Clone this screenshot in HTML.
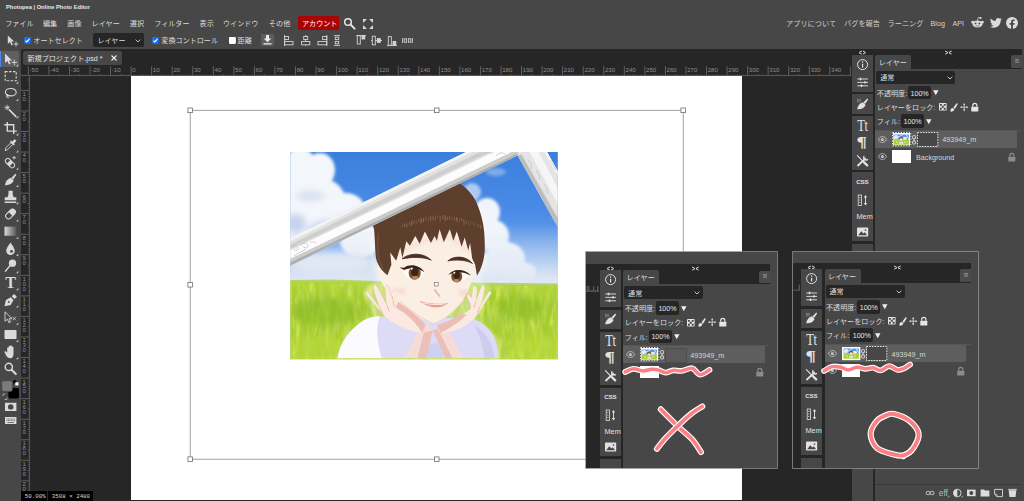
<!DOCTYPE html>
<html lang="ja"><head><meta charset="utf-8"><title>Photopea | Online Photo Editor</title>
<style>
html,body{margin:0;padding:0;width:1024px;height:501px;overflow:hidden;background:#262626;
font-family:"Liberation Sans","Noto Sans CJK JP",sans-serif;color:#dcdcdc;font-size:7.1px;line-height:1}
.a{position:absolute}
.t{position:absolute;white-space:nowrap;line-height:10px;height:10px;margin-top:0.9px}
svg{position:absolute;overflow:visible}
#top{left:0;top:0;width:1024px;height:49px;background:#474747}
#tb{left:0;top:49px;width:20.600px;height:452px;background:#474747}
#root{position:absolute;left:0;top:0;width:1024px;height:501px;overflow:hidden}

</style></head><body>
<div id="root">
<div class="a" id="top"></div>
<div class="t" style="left:6px;top:1.400px;font-size:5.700px;font-weight:bold;color:#e8e8e8">Photopea | Online Photo Editor</div>
<div class="t" style="left:5.2px;top:18px">ファイル</div>
<div class="t" style="left:43px;top:18px">編集</div>
<div class="t" style="left:67.3px;top:18px">画像</div>
<div class="t" style="left:91.6px;top:18px">レイヤー</div>
<div class="t" style="left:129.8px;top:18px">選択</div>
<div class="t" style="left:154.2px;top:18px">フィルター</div>
<div class="t" style="left:199.6px;top:18px">表示</div>
<div class="t" style="left:223px;top:18px">ウインドウ</div>
<div class="t" style="left:269px;top:18px">その他</div>
<div class="a" style="left:297.6px;top:16.3px;width:41px;height:14px;background:#a80404;border-radius:1.5px"></div>
<div class="t" style="left:302px;top:18px;color:#fff">アカウント</div>
<svg style="left:343px;top:17px" width="13" height="13" viewBox="0 0 13 13"><circle cx="5" cy="5" r="3.3" fill="none" stroke="#e6e6e6" stroke-width="1.5"/><path d="M7.4 7.4 L11.6 11.6" stroke="#e6e6e6" stroke-width="2" stroke-linecap="round"/></svg>
<svg style="left:362.5px;top:18.5px" width="10" height="10" viewBox="0 0 10 10"><path d="M0.7 3.2V0.7H3.2 M6.8 0.7H9.3V3.2 M9.3 6.8V9.3H6.8 M3.2 9.3H0.7V6.8" fill="none" stroke="#e6e6e6" stroke-width="1.4"/></svg>
<div class="t" style="left:786px;top:18px;font-size:7.2px;color:#d0d0d0">アプリについて</div>
<div class="t" style="left:844px;top:18px;font-size:7.2px;color:#d0d0d0">バグを報告</div>
<div class="t" style="left:887.5px;top:18px;font-size:7.2px;color:#d0d0d0">ラーニング</div>
<div class="t" style="left:930.5px;top:18px;font-size:7.2px;color:#d0d0d0">Blog</div>
<div class="t" style="left:952.5px;top:18px;font-size:7.2px;color:#d0d0d0">API</div>
<svg style="left:970.5px;top:16px" width="13" height="13" viewBox="0 0 13 13" fill="#dcdcdc"><ellipse cx="6.5" cy="8" rx="5" ry="3.6"/><circle cx="1.7" cy="6.2" r="1.4"/><circle cx="11.3" cy="6.2" r="1.4"/><circle cx="9.6" cy="2" r="1.1"/><path d="M6.5 4.6 L7.3 1.4 L9.6 2" fill="none" stroke="#dcdcdc" stroke-width="0.7"/><circle cx="4.6" cy="7.4" r="0.9" fill="#474747"/><circle cx="8.4" cy="7.4" r="0.9" fill="#474747"/><path d="M4.5 9.5 Q6.5 10.8 8.5 9.5" fill="none" stroke="#474747" stroke-width="0.6"/></svg>
<svg style="left:989.5px;top:17.5px" width="12" height="10" viewBox="0 0 24 20" fill="#dcdcdc"><path d="M23.6 2.4c-.9.4-1.8.6-2.8.8 1-.6 1.800-1.600 2.200-2.700-1 .6-2 1-3.100 1.200C19 .7 17.700.1 16.300.1c-2.700 0-4.900 2.200-4.900 4.900 0 .4 0 .8.100 1.100C7.400 5.900 3.800 4 1.400 1 1 1.700.8 2.600.8 3.500c0 1.700.9 3.200 2.200 4.100-.8 0-1.600-.2-2.200-.6v.1c0 2.400 1.700 4.400 3.900 4.800-.4.100-.8.200-1.300.2-.3 0-.6 0-.9-.1.600 2 2.400 3.400 4.600 3.400-1.700 1.300-3.800 2.100-6.100 2.100-.4 0-.8 0-1.200-.1 2.200 1.400 4.800 2.200 7.500 2.200 9.100 0 14-7.500 14-14v-.6c1-.7 1.800-1.600 2.500-2.600z"/></svg>
<svg style="left:1005.5px;top:16.5px" width="12" height="12" viewBox="0 0 12 12"><circle cx="6" cy="6" r="6" fill="#dcdcdc"/><path d="M8.300 7.700 L8.600 6 H6.900 V4.900 C6.900 4.400 7.100 4 7.800 4 H8.600 V2.500 C8.600 2.500 7.900 2.400 7.300 2.400 C5.900 2.400 5.100 3.200 5.100 4.700 V6 H3.600 V7.700 H5.100 V12 H6.900 V7.700 Z" fill="#474747"/></svg>
<svg style="left:6.5px;top:35px" width="12" height="12" viewBox="0 0 12 12"><path d="M0.8 0.6 L0.8 9 L3 7 L4.400 10.400 L5.800 9.800 L4.400 6.500 L7.200 6.500 Z" fill="#d8d8d8"/><path d="M9 6.500V11.500 M6.500 9H11.500" stroke="#d8d8d8" stroke-width="0.9"/></svg>
<svg style="left:24.2px;top:36.900px" width="6.900" height="6.900" viewBox="0 0 12 12"><rect width="12" height="12" rx="1.800" fill="#1a6fe8"/><path d="M2.600 6.200 L5 8.600 L9.600 3.400" fill="none" stroke="#fff" stroke-width="1.900"/></svg>
<div class="t" style="left:33.3px;top:35.400px">オートセレクト</div>
<div class="a" style="left:93px;top:33.2px;width:50.500px;height:14.300px;background:#262626;border-radius:2px"></div>
<div class="t" style="left:97.4px;top:35.400px">レイヤー</div>
<svg style="left:134.5px;top:38.5px" width="6" height="4" viewBox="0 0 6 4"><path d="M0.600 0.600 L3 3 L5.400 0.600" fill="none" stroke="#d0d0d0" stroke-width="0.9"/></svg>
<svg style="left:152.2px;top:36.900px" width="6.900" height="6.900" viewBox="0 0 12 12"><rect width="12" height="12" rx="1.800" fill="#1a6fe8"/><path d="M2.600 6.200 L5 8.600 L9.600 3.400" fill="none" stroke="#fff" stroke-width="1.900"/></svg>
<div class="t" style="left:161.3px;top:35.400px">変換コントロール</div>
<svg style="left:228.7px;top:36.900px" width="6.900" height="6.900" viewBox="0 0 12 12"><rect width="12" height="12" rx="1.800" fill="#fff"/></svg>
<div class="t" style="left:237.6px;top:35.400px">距離</div>
<div class="a" style="left:261.3px;top:33.600px;width:13.200px;height:12.800px;background:#5c5c5c;border-radius:1px"></div>
<svg style="left:263.4px;top:35.300px" width="9" height="10" viewBox="0 0 9 10" fill="#ececec"><path d="M3 0H6V3.500H8.300L4.500 7.200L0.700 3.500H3Z"/><rect x="0.500" y="8.200" width="8" height="1.300"/></svg>
<svg style="left:284px;top:35px" width="10" height="11" viewBox="0 0 10 11" fill="none" stroke="#d4d4d4" stroke-width="0.9"><path d="M0.600 0V11"/><rect x="0.600" y="1.500" width="4" height="3"/><rect x="0.600" y="6.500" width="8.400" height="3.300"/></svg>
<svg style="left:300.5px;top:35px" width="10" height="11" viewBox="0 0 10 11" fill="none" stroke="#d4d4d4" stroke-width="0.9"><path d="M4.700 0V11"/><rect x="2.700" y="1.500" width="4" height="3" fill="#474747"/><rect x="0.600" y="6.500" width="8.200" height="3.300" fill="#474747"/></svg>
<svg style="left:317px;top:35px" width="11" height="11" viewBox="0 0 11 11" fill="none" stroke="#d4d4d4" stroke-width="0.9"><path d="M9.800 0V11"/><rect x="5.600" y="1.500" width="4.200" height="3"/><rect x="1" y="6.500" width="8.800" height="3.300"/></svg>
<svg style="left:333.5px;top:35px" width="6" height="11" viewBox="0 0 6 11" fill="none" stroke="#d4d4d4" stroke-width="0.9"><path d="M0 0.600H6M0 10.400H6"/><rect x="1.300" y="2.200" width="3.400" height="2.400"/><rect x="1.300" y="6.400" width="3.400" height="2.400"/></svg>
<svg style="left:356px;top:35px" width="10" height="11" viewBox="0 0 10 11" fill="none" stroke="#d4d4d4" stroke-width="0.9"><path d="M0 0.600H10"/><rect x="1.300" y="0.600" width="3" height="8.400"/><rect x="6" y="0.600" width="2.800" height="3.400" fill="#d4d4d4"/></svg>
<svg style="left:371px;top:35px" width="11" height="11" viewBox="0 0 11 11" fill="none" stroke="#d4d4d4" stroke-width="0.9"><path d="M0 5.500H11"/><rect x="1.300" y="1.200" width="3" height="8.600" fill="#474747"/><rect x="6.300" y="3.600" width="3" height="3.800" fill="#d4d4d4"/></svg>
<svg style="left:387px;top:35px" width="10" height="11" viewBox="0 0 10 11" fill="none" stroke="#d4d4d4" stroke-width="0.9"><path d="M0 10.400H10"/><rect x="1.300" y="1.600" width="3" height="8.800"/><rect x="6" y="6.400" width="2.800" height="4" fill="#d4d4d4"/></svg>
<svg style="left:402px;top:35px" width="11" height="11" viewBox="0 0 11 11" fill="none" stroke="#d4d4d4" stroke-width="0.9"><path d="M0.600 3V8M10.400 3V8"/><rect x="2.200" y="3.800" width="2.400" height="3.400"/><rect x="6.400" y="3.800" width="2.400" height="3.400"/></svg>
<div class="a" style="left:23px;top:51px;width:99px;height:14.200px;background:#474747;border-radius:2px"></div>
<div class="t" style="left:27.5px;top:53.200px;color:#e4e4e4">新規プロジェクト.psd *</div>
<svg style="left:111px;top:55px" width="6" height="6" viewBox="0 0 6 6"><path d="M0.500 0.500L5.500 5.500M5.500 0.500L0.500 5.500" stroke="#f0f0f0" stroke-width="1.100"/></svg>
<svg style="left:0;top:0" width="1024" height="501" viewBox="0 0 1024 501"><path d="M22.18 74.800V75.900 M24.24 74.800V75.900 M26.30 74.800V75.900 M28.35 66.200V75.900 M30.40 74.800V75.900 M32.46 74.800V75.900 M34.51 74.800V75.900 M36.57 74.800V75.900 M38.62 74.200V75.900 M40.68 74.800V75.900 M42.73 74.800V75.900 M44.79 74.800V75.900 M46.84 74.800V75.900 M48.90 66.200V75.900 M50.95 74.800V75.900 M53.01 74.800V75.900 M55.06 74.800V75.900 M57.12 74.800V75.900 M59.17 74.200V75.900 M61.23 74.800V75.900 M63.28 74.800V75.900 M65.34 74.800V75.900 M67.39 74.800V75.900 M69.45 66.200V75.900 M71.50 74.800V75.900 M73.56 74.800V75.900 M75.61 74.800V75.900 M77.67 74.800V75.900 M79.72 74.200V75.900 M81.78 74.800V75.900 M83.83 74.800V75.900 M85.89 74.800V75.900 M87.94 74.800V75.900 M90.00 66.200V75.900 M92.05 74.800V75.900 M94.11 74.800V75.900 M96.16 74.800V75.900 M98.22 74.800V75.900 M100.27 74.200V75.900 M102.33 74.800V75.900 M104.38 74.800V75.900 M106.44 74.800V75.900 M108.49 74.800V75.900 M110.55 66.200V75.900 M112.60 74.800V75.900 M114.66 74.800V75.900 M116.71 74.800V75.900 M118.77 74.800V75.900 M120.82 74.200V75.900 M122.88 74.800V75.900 M124.93 74.800V75.900 M126.99 74.800V75.900 M129.04 74.800V75.900 M131.10 66.200V75.900 M133.16 74.800V75.900 M135.21 74.800V75.900 M137.26 74.800V75.900 M139.32 74.800V75.900 M141.38 74.200V75.900 M143.43 74.800V75.900 M145.48 74.800V75.900 M147.54 74.800V75.900 M149.59 74.800V75.900 M151.65 66.200V75.900 M153.70 74.800V75.900 M155.76 74.800V75.900 M157.81 74.800V75.900 M159.87 74.800V75.900 M161.92 74.200V75.900 M163.98 74.800V75.900 M166.03 74.800V75.900 M168.09 74.800V75.900 M170.14 74.800V75.900 M172.20 66.200V75.900 M174.25 74.800V75.900 M176.31 74.800V75.900 M178.37 74.800V75.900 M180.42 74.800V75.900 M182.47 74.200V75.900 M184.53 74.800V75.900 M186.58 74.800V75.900 M188.64 74.800V75.900 M190.69 74.800V75.900 M192.75 66.200V75.900 M194.81 74.800V75.900 M196.86 74.800V75.900 M198.91 74.800V75.900 M200.97 74.800V75.900 M203.02 74.200V75.900 M205.08 74.800V75.900 M207.13 74.800V75.900 M209.19 74.800V75.900 M211.25 74.800V75.900 M213.30 66.200V75.900 M215.36 74.800V75.900 M217.41 74.800V75.900 M219.46 74.800V75.900 M221.52 74.800V75.900 M223.57 74.200V75.900 M225.63 74.800V75.900 M227.69 74.800V75.900 M229.74 74.800V75.900 M231.80 74.800V75.900 M233.85 66.200V75.900 M235.90 74.800V75.900 M237.96 74.800V75.900 M240.01 74.800V75.900 M242.07 74.800V75.900 M244.12 74.200V75.900 M246.18 74.800V75.900 M248.24 74.800V75.900 M250.29 74.800V75.900 M252.34 74.800V75.900 M254.40 66.200V75.900 M256.45 74.800V75.900 M258.51 74.800V75.900 M260.56 74.800V75.900 M262.62 74.800V75.900 M264.67 74.200V75.900 M266.73 74.800V75.900 M268.78 74.800V75.900 M270.84 74.800V75.900 M272.89 74.800V75.900 M274.95 66.200V75.900 M277.00 74.800V75.900 M279.06 74.800V75.900 M281.12 74.800V75.900 M283.17 74.800V75.900 M285.23 74.200V75.900 M287.28 74.800V75.900 M289.34 74.800V75.900 M291.39 74.800V75.900 M293.44 74.800V75.900 M295.50 66.200V75.900 M297.55 74.800V75.900 M299.61 74.800V75.900 M301.66 74.800V75.900 M303.72 74.800V75.900 M305.77 74.200V75.900 M307.83 74.800V75.900 M309.88 74.800V75.900 M311.94 74.800V75.900 M314.00 74.800V75.900 M316.05 66.200V75.900 M318.11 74.800V75.900 M320.16 74.800V75.900 M322.22 74.800V75.900 M324.27 74.800V75.900 M326.32 74.200V75.900 M328.38 74.800V75.900 M330.44 74.800V75.900 M332.49 74.800V75.900 M334.54 74.800V75.900 M336.60 66.200V75.900 M338.65 74.800V75.900 M340.71 74.800V75.900 M342.76 74.800V75.900 M344.82 74.800V75.900 M346.88 74.200V75.900 M348.93 74.800V75.900 M350.99 74.800V75.900 M353.04 74.800V75.900 M355.10 74.800V75.900 M357.15 66.200V75.900 M359.21 74.800V75.900 M361.26 74.800V75.900 M363.31 74.800V75.900 M365.37 74.800V75.900 M367.42 74.200V75.900 M369.48 74.800V75.900 M371.53 74.800V75.900 M373.59 74.800V75.900 M375.64 74.800V75.900 M377.70 66.200V75.900 M379.75 74.800V75.900 M381.81 74.800V75.900 M383.87 74.800V75.900 M385.92 74.800V75.900 M387.98 74.200V75.900 M390.03 74.800V75.900 M392.09 74.800V75.900 M394.14 74.800V75.900 M396.20 74.800V75.900 M398.25 66.200V75.900 M400.31 74.800V75.900 M402.36 74.800V75.900 M404.41 74.800V75.900 M406.47 74.800V75.900 M408.52 74.200V75.900 M410.58 74.800V75.900 M412.63 74.800V75.900 M414.69 74.800V75.900 M416.75 74.800V75.900 M418.80 66.200V75.900 M420.86 74.800V75.900 M422.91 74.800V75.900 M424.97 74.800V75.900 M427.02 74.800V75.900 M429.08 74.200V75.900 M431.13 74.800V75.900 M433.18 74.800V75.900 M435.24 74.800V75.900 M437.30 74.800V75.900 M439.35 66.200V75.900 M441.40 74.800V75.900 M443.46 74.800V75.900 M445.51 74.800V75.900 M447.57 74.800V75.900 M449.62 74.200V75.900 M451.68 74.800V75.900 M453.74 74.800V75.900 M455.79 74.800V75.900 M457.85 74.800V75.900 M459.90 66.200V75.900 M461.96 74.800V75.900 M464.01 74.800V75.900 M466.07 74.800V75.900 M468.12 74.800V75.900 M470.17 74.200V75.900 M472.23 74.800V75.900 M474.28 74.800V75.900 M476.34 74.800V75.900 M478.39 74.800V75.900 M480.45 66.200V75.900 M482.50 74.800V75.900 M484.56 74.800V75.900 M486.62 74.800V75.900 M488.67 74.800V75.900 M490.73 74.200V75.900 M492.78 74.800V75.900 M494.84 74.800V75.900 M496.89 74.800V75.900 M498.95 74.800V75.900 M501.00 66.200V75.900 M503.06 74.800V75.900 M505.11 74.800V75.900 M507.16 74.800V75.900 M509.22 74.800V75.900 M511.27 74.200V75.900 M513.33 74.800V75.900 M515.38 74.800V75.900 M517.44 74.800V75.900 M519.50 74.800V75.900 M521.55 66.200V75.900 M523.61 74.800V75.900 M525.66 74.800V75.900 M527.72 74.800V75.900 M529.77 74.800V75.900 M531.83 74.200V75.900 M533.88 74.800V75.900 M535.94 74.800V75.900 M537.99 74.800V75.900 M540.05 74.800V75.900 M542.10 66.200V75.900 M544.15 74.800V75.900 M546.21 74.800V75.900 M548.27 74.800V75.900 M550.32 74.800V75.900 M552.38 74.200V75.900 M554.43 74.800V75.900 M556.49 74.800V75.900 M558.54 74.800V75.900 M560.60 74.800V75.900 M562.65 66.200V75.900 M564.71 74.800V75.900 M566.76 74.800V75.900 M568.82 74.800V75.900 M570.87 74.800V75.900 M572.92 74.200V75.900 M574.98 74.800V75.900 M577.04 74.800V75.900 M579.09 74.800V75.900 M581.14 74.800V75.900 M583.20 66.200V75.900 M585.25 74.800V75.900 M587.31 74.800V75.900 M589.37 74.800V75.900 M591.42 74.800V75.900 M593.48 74.200V75.900 M595.53 74.800V75.900 M597.59 74.800V75.900 M599.64 74.800V75.900 M601.69 74.800V75.900 M603.75 66.200V75.900 M605.81 74.800V75.900 M607.86 74.800V75.900 M609.92 74.800V75.900 M611.97 74.800V75.900 M614.02 74.200V75.900 M616.08 74.800V75.900 M618.13 74.800V75.900 M620.19 74.800V75.900 M622.25 74.800V75.900 M624.30 66.200V75.900 M626.36 74.800V75.900 M628.41 74.800V75.900 M630.47 74.800V75.900 M632.52 74.800V75.900 M634.58 74.200V75.900 M636.63 74.800V75.900 M638.69 74.800V75.900 M640.74 74.800V75.900 M642.79 74.800V75.900 M644.85 66.200V75.900 M646.91 74.800V75.900 M648.96 74.800V75.900 M651.02 74.800V75.900 M653.07 74.800V75.900 M655.12 74.200V75.900 M657.18 74.800V75.900 M659.24 74.800V75.900 M661.29 74.800V75.900 M663.35 74.800V75.900 M665.40 66.200V75.900 M667.46 74.800V75.900 M669.51 74.800V75.900 M671.57 74.800V75.900 M673.62 74.800V75.900 M675.68 74.200V75.900 M677.73 74.800V75.900 M679.79 74.800V75.900 M681.84 74.800V75.900 M683.89 74.800V75.900 M685.95 66.200V75.900 M688.00 74.800V75.900 M690.06 74.800V75.900 M692.12 74.800V75.900 M694.17 74.800V75.900 M696.23 74.200V75.900 M698.28 74.800V75.900 M700.34 74.800V75.900 M702.39 74.800V75.900 M704.45 74.800V75.900 M706.50 66.200V75.900 M708.56 74.800V75.900 M710.61 74.800V75.900 M712.67 74.800V75.900 M714.72 74.800V75.900 M716.77 74.200V75.900 M718.83 74.800V75.900 M720.89 74.800V75.900 M722.94 74.800V75.900 M725.00 74.800V75.900 M727.05 66.200V75.900 M729.11 74.800V75.900 M731.16 74.800V75.900 M733.22 74.800V75.900 M735.27 74.800V75.900 M737.33 74.200V75.900 M739.38 74.800V75.900 M741.44 74.800V75.900 M743.49 74.800V75.900 M745.54 74.800V75.900 M747.60 66.200V75.900 M749.66 74.800V75.900 M751.71 74.800V75.900 M753.77 74.800V75.900 M755.82 74.800V75.900 M757.88 74.200V75.900 M759.93 74.800V75.900 M761.99 74.800V75.900 M764.04 74.800V75.900 M766.10 74.800V75.900 M768.15 66.200V75.900 M770.21 74.800V75.900 M772.26 74.800V75.900 M774.32 74.800V75.900 M776.37 74.800V75.900 M778.43 74.200V75.900 M780.48 74.800V75.900 M782.54 74.800V75.900 M784.59 74.800V75.900 M786.64 74.800V75.900 M788.70 66.200V75.900 M790.75 74.800V75.900 M792.81 74.800V75.900 M794.87 74.800V75.900 M796.92 74.800V75.900 M798.98 74.200V75.900 M801.03 74.800V75.900 M803.09 74.800V75.900 M805.14 74.800V75.900 M807.20 74.800V75.900 M809.25 66.200V75.900 M811.31 74.800V75.900 M813.36 74.800V75.900 M815.42 74.800V75.900 M817.47 74.800V75.900 M819.52 74.200V75.900 M821.58 74.800V75.900 M823.64 74.800V75.900 M825.69 74.800V75.900 M827.75 74.800V75.900 M829.80 66.200V75.900 M831.86 74.800V75.900 M833.91 74.800V75.900 M835.97 74.800V75.900 M838.02 74.800V75.900 M840.08 74.200V75.900 M842.13 74.800V75.900 M844.19 74.800V75.900 M846.24 74.800V75.900 M848.29 74.800V75.900 M850.35 66.200V75.900" stroke="#808080" stroke-width="0.650" fill="none"/><path d="M21 75.600H851.500" stroke="#6a6a6a" stroke-width="0.600"/><text x="29.55" y="72.300" font-size="6.100" fill="#909090" font-family="Liberation Sans, sans-serif">-50</text><text x="50.10" y="72.300" font-size="6.100" fill="#909090" font-family="Liberation Sans, sans-serif">-40</text><text x="70.65" y="72.300" font-size="6.100" fill="#909090" font-family="Liberation Sans, sans-serif">-30</text><text x="91.20" y="72.300" font-size="6.100" fill="#909090" font-family="Liberation Sans, sans-serif">-20</text><text x="111.75" y="72.300" font-size="6.100" fill="#909090" font-family="Liberation Sans, sans-serif">-10</text><text x="132.30" y="72.300" font-size="6.100" fill="#909090" font-family="Liberation Sans, sans-serif">0</text><text x="152.85" y="72.300" font-size="6.100" fill="#909090" font-family="Liberation Sans, sans-serif">10</text><text x="173.40" y="72.300" font-size="6.100" fill="#909090" font-family="Liberation Sans, sans-serif">20</text><text x="193.95" y="72.300" font-size="6.100" fill="#909090" font-family="Liberation Sans, sans-serif">30</text><text x="214.50" y="72.300" font-size="6.100" fill="#909090" font-family="Liberation Sans, sans-serif">40</text><text x="235.05" y="72.300" font-size="6.100" fill="#909090" font-family="Liberation Sans, sans-serif">50</text><text x="255.60" y="72.300" font-size="6.100" fill="#909090" font-family="Liberation Sans, sans-serif">60</text><text x="276.15" y="72.300" font-size="6.100" fill="#909090" font-family="Liberation Sans, sans-serif">70</text><text x="296.70" y="72.300" font-size="6.100" fill="#909090" font-family="Liberation Sans, sans-serif">80</text><text x="317.25" y="72.300" font-size="6.100" fill="#909090" font-family="Liberation Sans, sans-serif">90</text><text x="337.80" y="72.300" font-size="6.100" fill="#909090" font-family="Liberation Sans, sans-serif">100</text><text x="358.35" y="72.300" font-size="6.100" fill="#909090" font-family="Liberation Sans, sans-serif">110</text><text x="378.90" y="72.300" font-size="6.100" fill="#909090" font-family="Liberation Sans, sans-serif">120</text><text x="399.45" y="72.300" font-size="6.100" fill="#909090" font-family="Liberation Sans, sans-serif">130</text><text x="420.00" y="72.300" font-size="6.100" fill="#909090" font-family="Liberation Sans, sans-serif">140</text><text x="440.55" y="72.300" font-size="6.100" fill="#909090" font-family="Liberation Sans, sans-serif">150</text><text x="461.10" y="72.300" font-size="6.100" fill="#909090" font-family="Liberation Sans, sans-serif">160</text><text x="481.65" y="72.300" font-size="6.100" fill="#909090" font-family="Liberation Sans, sans-serif">170</text><text x="502.20" y="72.300" font-size="6.100" fill="#909090" font-family="Liberation Sans, sans-serif">180</text><text x="522.75" y="72.300" font-size="6.100" fill="#909090" font-family="Liberation Sans, sans-serif">190</text><text x="543.30" y="72.300" font-size="6.100" fill="#909090" font-family="Liberation Sans, sans-serif">200</text><text x="563.85" y="72.300" font-size="6.100" fill="#909090" font-family="Liberation Sans, sans-serif">210</text><text x="584.40" y="72.300" font-size="6.100" fill="#909090" font-family="Liberation Sans, sans-serif">220</text><text x="604.95" y="72.300" font-size="6.100" fill="#909090" font-family="Liberation Sans, sans-serif">230</text><text x="625.50" y="72.300" font-size="6.100" fill="#909090" font-family="Liberation Sans, sans-serif">240</text><text x="646.05" y="72.300" font-size="6.100" fill="#909090" font-family="Liberation Sans, sans-serif">250</text><text x="666.60" y="72.300" font-size="6.100" fill="#909090" font-family="Liberation Sans, sans-serif">260</text><text x="687.15" y="72.300" font-size="6.100" fill="#909090" font-family="Liberation Sans, sans-serif">270</text><text x="707.70" y="72.300" font-size="6.100" fill="#909090" font-family="Liberation Sans, sans-serif">280</text><text x="728.25" y="72.300" font-size="6.100" fill="#909090" font-family="Liberation Sans, sans-serif">290</text><text x="748.80" y="72.300" font-size="6.100" fill="#909090" font-family="Liberation Sans, sans-serif">300</text><text x="769.35" y="72.300" font-size="6.100" fill="#909090" font-family="Liberation Sans, sans-serif">310</text><text x="789.90" y="72.300" font-size="6.100" fill="#909090" font-family="Liberation Sans, sans-serif">320</text><text x="810.45" y="72.300" font-size="6.100" fill="#909090" font-family="Liberation Sans, sans-serif">330</text><text x="831.00" y="72.300" font-size="6.100" fill="#909090" font-family="Liberation Sans, sans-serif">340</text><path d="M28.500 78.07H29.800 M27.800 80.12H29.800 M28.500 82.18H29.800 M28.500 84.23H29.800 M28.500 86.29H29.800 M28.500 88.34H29.800 M21 90.40H29.800 M28.500 92.46H29.800 M28.500 94.51H29.800 M28.500 96.57H29.800 M28.500 98.62H29.800 M27.800 100.68H29.800 M28.500 102.73H29.800 M28.500 104.79H29.800 M28.500 106.84H29.800 M28.500 108.90H29.800 M21 110.95H29.800 M28.500 113.01H29.800 M28.500 115.06H29.800 M28.500 117.12H29.800 M28.500 119.17H29.800 M27.800 121.23H29.800 M28.500 123.28H29.800 M28.500 125.34H29.800 M28.500 127.39H29.800 M28.500 129.44H29.800 M21 131.50H29.800 M28.500 133.56H29.800 M28.500 135.61H29.800 M28.500 137.67H29.800 M28.500 139.72H29.800 M27.800 141.78H29.800 M28.500 143.83H29.800 M28.500 145.88H29.800 M28.500 147.94H29.800 M28.500 150.00H29.800 M21 152.05H29.800 M28.500 154.11H29.800 M28.500 156.16H29.800 M28.500 158.22H29.800 M28.500 160.27H29.800 M27.800 162.32H29.800 M28.500 164.38H29.800 M28.500 166.44H29.800 M28.500 168.49H29.800 M28.500 170.55H29.800 M21 172.60H29.800 M28.500 174.66H29.800 M28.500 176.71H29.800 M28.500 178.76H29.800 M28.500 180.82H29.800 M27.800 182.88H29.800 M28.500 184.93H29.800 M28.500 186.99H29.800 M28.500 189.04H29.800 M28.500 191.10H29.800 M21 193.15H29.800 M28.500 195.20H29.800 M28.500 197.26H29.800 M28.500 199.31H29.800 M28.500 201.37H29.800 M27.800 203.43H29.800 M28.500 205.48H29.800 M28.500 207.54H29.800 M28.500 209.59H29.800 M28.500 211.65H29.800 M21 213.70H29.800 M28.500 215.75H29.800 M28.500 217.81H29.800 M28.500 219.87H29.800 M28.500 221.92H29.800 M27.800 223.97H29.800 M28.500 226.03H29.800 M28.500 228.09H29.800 M28.500 230.14H29.800 M28.500 232.20H29.800 M21 234.25H29.800 M28.500 236.31H29.800 M28.500 238.36H29.800 M28.500 240.42H29.800 M28.500 242.47H29.800 M27.800 244.53H29.800 M28.500 246.58H29.800 M28.500 248.64H29.800 M28.500 250.69H29.800 M28.500 252.75H29.800 M21 254.80H29.800 M28.500 256.86H29.800 M28.500 258.91H29.800 M28.500 260.97H29.800 M28.500 263.02H29.800 M27.800 265.08H29.800 M28.500 267.13H29.800 M28.500 269.19H29.800 M28.500 271.24H29.800 M28.500 273.30H29.800 M21 275.35H29.800 M28.500 277.40H29.800 M28.500 279.46H29.800 M28.500 281.51H29.800 M28.500 283.57H29.800 M27.800 285.62H29.800 M28.500 287.68H29.800 M28.500 289.74H29.800 M28.500 291.79H29.800 M28.500 293.85H29.800 M21 295.90H29.800 M28.500 297.96H29.800 M28.500 300.01H29.800 M28.500 302.07H29.800 M28.500 304.12H29.800 M27.800 306.18H29.800 M28.500 308.23H29.800 M28.500 310.28H29.800 M28.500 312.34H29.800 M28.500 314.40H29.800 M21 316.45H29.800 M28.500 318.50H29.800 M28.500 320.56H29.800 M28.500 322.62H29.800 M28.500 324.67H29.800 M27.800 326.73H29.800 M28.500 328.78H29.800 M28.500 330.84H29.800 M28.500 332.89H29.800 M28.500 334.95H29.800 M21 337.00H29.800 M28.500 339.06H29.800 M28.500 341.11H29.800 M28.500 343.17H29.800 M28.500 345.22H29.800 M27.800 347.27H29.800 M28.500 349.33H29.800 M28.500 351.38H29.800 M28.500 353.44H29.800 M28.500 355.50H29.800 M21 357.55H29.800 M28.500 359.61H29.800 M28.500 361.66H29.800 M28.500 363.72H29.800 M28.500 365.77H29.800 M27.800 367.83H29.800 M28.500 369.88H29.800 M28.500 371.93H29.800 M28.500 373.99H29.800 M28.500 376.05H29.800 M21 378.10H29.800 M28.500 380.15H29.800 M28.500 382.21H29.800 M28.500 384.26H29.800 M28.500 386.32H29.800 M27.800 388.38H29.800 M28.500 390.43H29.800 M28.500 392.49H29.800 M28.500 394.54H29.800 M28.500 396.60H29.800 M21 398.65H29.800 M28.500 400.71H29.800 M28.500 402.76H29.800 M28.500 404.82H29.800 M28.500 406.87H29.800 M27.800 408.92H29.800 M28.500 410.98H29.800 M28.500 413.03H29.800 M28.500 415.09H29.800 M28.500 417.14H29.800 M21 419.20H29.800 M28.500 421.25H29.800 M28.500 423.31H29.800 M28.500 425.37H29.800 M28.500 427.42H29.800 M27.800 429.48H29.800 M28.500 431.53H29.800 M28.500 433.59H29.800 M28.500 435.64H29.800 M28.500 437.70H29.800 M21 439.75H29.800 M28.500 441.81H29.800 M28.500 443.86H29.800 M28.500 445.91H29.800 M28.500 447.97H29.800 M27.800 450.02H29.800 M28.500 452.08H29.800 M28.500 454.13H29.800 M28.500 456.19H29.800 M28.500 458.25H29.800 M21 460.30H29.800 M28.500 462.36H29.800 M28.500 464.41H29.800 M28.500 466.47H29.800 M28.500 468.52H29.800 M27.800 470.58H29.800 M28.500 472.63H29.800 M28.500 474.68H29.800 M28.500 476.74H29.800 M28.500 478.80H29.800 M21 480.85H29.800 M28.500 482.90H29.800 M28.500 484.96H29.800 M28.500 487.01H29.800 M28.500 489.07H29.800 M27.800 491.12H29.800 M28.500 493.18H29.800 M28.500 495.24H29.800 M28.500 497.29H29.800 M28.500 499.35H29.800" stroke="#808080" stroke-width="0.650" fill="none"/><path d="M29.600 75.500V501" stroke="#6a6a6a" stroke-width="0.600"/><text x="22.600" y="95.80" font-size="6" fill="#909090" font-family="Liberation Sans, sans-serif">1</text><text x="22.600" y="100.70" font-size="6" fill="#909090" font-family="Liberation Sans, sans-serif">0</text><text x="22.600" y="116.35" font-size="6" fill="#909090" font-family="Liberation Sans, sans-serif">2</text><text x="22.600" y="121.25" font-size="6" fill="#909090" font-family="Liberation Sans, sans-serif">0</text><text x="22.600" y="136.90" font-size="6" fill="#909090" font-family="Liberation Sans, sans-serif">3</text><text x="22.600" y="141.80" font-size="6" fill="#909090" font-family="Liberation Sans, sans-serif">0</text><text x="22.600" y="157.45" font-size="6" fill="#909090" font-family="Liberation Sans, sans-serif">4</text><text x="22.600" y="162.35" font-size="6" fill="#909090" font-family="Liberation Sans, sans-serif">0</text><text x="22.600" y="178.00" font-size="6" fill="#909090" font-family="Liberation Sans, sans-serif">5</text><text x="22.600" y="182.90" font-size="6" fill="#909090" font-family="Liberation Sans, sans-serif">0</text><text x="22.600" y="198.55" font-size="6" fill="#909090" font-family="Liberation Sans, sans-serif">6</text><text x="22.600" y="203.45" font-size="6" fill="#909090" font-family="Liberation Sans, sans-serif">0</text><text x="22.600" y="219.10" font-size="6" fill="#909090" font-family="Liberation Sans, sans-serif">7</text><text x="22.600" y="224.00" font-size="6" fill="#909090" font-family="Liberation Sans, sans-serif">0</text><text x="22.600" y="239.65" font-size="6" fill="#909090" font-family="Liberation Sans, sans-serif">8</text><text x="22.600" y="244.55" font-size="6" fill="#909090" font-family="Liberation Sans, sans-serif">0</text><text x="22.600" y="260.20" font-size="6" fill="#909090" font-family="Liberation Sans, sans-serif">9</text><text x="22.600" y="265.10" font-size="6" fill="#909090" font-family="Liberation Sans, sans-serif">0</text><text x="22.600" y="280.75" font-size="6" fill="#909090" font-family="Liberation Sans, sans-serif">1</text><text x="22.600" y="285.65" font-size="6" fill="#909090" font-family="Liberation Sans, sans-serif">0</text><text x="22.600" y="290.55" font-size="6" fill="#909090" font-family="Liberation Sans, sans-serif">0</text><text x="22.600" y="301.30" font-size="6" fill="#909090" font-family="Liberation Sans, sans-serif">1</text><text x="22.600" y="306.20" font-size="6" fill="#909090" font-family="Liberation Sans, sans-serif">1</text><text x="22.600" y="311.10" font-size="6" fill="#909090" font-family="Liberation Sans, sans-serif">0</text><text x="22.600" y="321.85" font-size="6" fill="#909090" font-family="Liberation Sans, sans-serif">1</text><text x="22.600" y="326.75" font-size="6" fill="#909090" font-family="Liberation Sans, sans-serif">2</text><text x="22.600" y="331.65" font-size="6" fill="#909090" font-family="Liberation Sans, sans-serif">0</text><text x="22.600" y="342.40" font-size="6" fill="#909090" font-family="Liberation Sans, sans-serif">1</text><text x="22.600" y="347.30" font-size="6" fill="#909090" font-family="Liberation Sans, sans-serif">3</text><text x="22.600" y="352.20" font-size="6" fill="#909090" font-family="Liberation Sans, sans-serif">0</text><text x="22.600" y="362.95" font-size="6" fill="#909090" font-family="Liberation Sans, sans-serif">1</text><text x="22.600" y="367.85" font-size="6" fill="#909090" font-family="Liberation Sans, sans-serif">4</text><text x="22.600" y="372.75" font-size="6" fill="#909090" font-family="Liberation Sans, sans-serif">0</text><text x="22.600" y="383.50" font-size="6" fill="#909090" font-family="Liberation Sans, sans-serif">1</text><text x="22.600" y="388.40" font-size="6" fill="#909090" font-family="Liberation Sans, sans-serif">5</text><text x="22.600" y="393.30" font-size="6" fill="#909090" font-family="Liberation Sans, sans-serif">0</text><text x="22.600" y="404.05" font-size="6" fill="#909090" font-family="Liberation Sans, sans-serif">1</text><text x="22.600" y="408.95" font-size="6" fill="#909090" font-family="Liberation Sans, sans-serif">6</text><text x="22.600" y="413.85" font-size="6" fill="#909090" font-family="Liberation Sans, sans-serif">0</text><text x="22.600" y="424.60" font-size="6" fill="#909090" font-family="Liberation Sans, sans-serif">1</text><text x="22.600" y="429.50" font-size="6" fill="#909090" font-family="Liberation Sans, sans-serif">7</text><text x="22.600" y="434.40" font-size="6" fill="#909090" font-family="Liberation Sans, sans-serif">0</text><text x="22.600" y="445.15" font-size="6" fill="#909090" font-family="Liberation Sans, sans-serif">1</text><text x="22.600" y="450.05" font-size="6" fill="#909090" font-family="Liberation Sans, sans-serif">8</text><text x="22.600" y="454.95" font-size="6" fill="#909090" font-family="Liberation Sans, sans-serif">0</text><text x="22.600" y="465.70" font-size="6" fill="#909090" font-family="Liberation Sans, sans-serif">1</text><text x="22.600" y="470.60" font-size="6" fill="#909090" font-family="Liberation Sans, sans-serif">9</text><text x="22.600" y="475.50" font-size="6" fill="#909090" font-family="Liberation Sans, sans-serif">0</text><text x="22.600" y="486.25" font-size="6" fill="#909090" font-family="Liberation Sans, sans-serif">2</text><text x="22.600" y="491.15" font-size="6" fill="#909090" font-family="Liberation Sans, sans-serif">0</text><text x="22.600" y="496.05" font-size="6" fill="#909090" font-family="Liberation Sans, sans-serif">0</text><text x="22.600" y="506.80" font-size="6" fill="#909090" font-family="Liberation Sans, sans-serif">2</text><text x="22.600" y="511.70" font-size="6" fill="#909090" font-family="Liberation Sans, sans-serif">1</text><text x="22.600" y="516.60" font-size="6" fill="#909090" font-family="Liberation Sans, sans-serif">0</text></svg>
<div class="a" style="left:131.200px;top:75.900px;width:610.500px;height:423.700px;background:#fff"></div>
<div class="a" style="left:21px;top:491.300px;width:25.800px;height:9.700px;background:#000"></div>
<div class="a" style="left:48px;top:491.300px;width:44.500px;height:9.700px;background:#000"></div>
<div class="t" style="left:24.800px;top:491.300px;font-family:'Liberation Mono',monospace;font-size:5.800px;color:#d8d8d8">50.00%</div>
<div class="t" style="left:51.800px;top:491.300px;font-family:'Liberation Mono',monospace;font-size:5.800px;color:#d8d8d8">3508 × 2480</div>
<svg style="left:0;top:0" width="1024" height="501" viewBox="0 0 1024 501"><defs>
<clipPath id="imclip"><rect x="290.300" y="152" width="267.500" height="207.300"/></clipPath>
<linearGradient id="sky" x1="0" y1="152" x2="0" y2="285" gradientUnits="userSpaceOnUse">
<stop offset="0" stop-color="#3b7fdc"/><stop offset="0.450" stop-color="#4a8be6"/><stop offset="0.800" stop-color="#78abee"/><stop offset="1" stop-color="#c0d4ef"/></linearGradient>
<linearGradient id="grass" x1="0" y1="281" x2="0" y2="360" gradientUnits="userSpaceOnUse">
<stop offset="0" stop-color="#b0d634"/><stop offset="0.300" stop-color="#9ec92a"/><stop offset="0.700" stop-color="#a8ce2c"/><stop offset="1" stop-color="#b6d836"/></linearGradient>
<filter id="b1" x="-20%" y="-20%" width="140%" height="140%"><feGaussianBlur stdDeviation="1.600"/></filter>
<filter id="b2" x="-20%" y="-20%" width="140%" height="140%"><feGaussianBlur stdDeviation="3"/></filter>
<filter id="b05" x="-20%" y="-20%" width="140%" height="140%"><feGaussianBlur stdDeviation="0.600"/></filter>
<filter id="b03" x="-20%" y="-20%" width="140%" height="140%"><feGaussianBlur stdDeviation="0.350"/></filter>
<filter id="gt" x="0" y="0" width="100%" height="100%"><feTurbulence type="fractalNoise" baseFrequency="0.200 0.050" numOctaves="3" seed="7" result="n"/><feColorMatrix in="n" type="matrix" values="0 0 0 0 0.780  0 0 0 0 0.860  0 0 0 0 0.140  1.600 0 0 0 -0.620"/><feComposite in2="SourceGraphic" operator="in"/></filter>
<filter id="gd" x="0" y="0" width="100%" height="100%"><feTurbulence type="fractalNoise" baseFrequency="0.160 0.045" numOctaves="3" seed="23" result="n"/><feColorMatrix in="n" type="matrix" values="0 0 0 0 0.420  0 0 0 0 0.620  0 0 0 0 0.100  0 1.600 0 0 -0.640"/><feComposite in2="SourceGraphic" operator="in"/></filter>
</defs><g clip-path="url(#imclip)"><rect x="290" y="152" width="268" height="208" fill="url(#sky)"/><g filter="url(#b1)" fill="#f3f6fb"><ellipse cx="300" cy="172" rx="18" ry="24"/><ellipse cx="320" cy="170" rx="15" ry="17"/><ellipse cx="314" cy="202" rx="32" ry="26"/><ellipse cx="346" cy="212" rx="20" ry="19"/><ellipse cx="300" cy="235" rx="20" ry="20"/><ellipse cx="360" cy="240" rx="20" ry="18"/></g><g filter="url(#b2)" fill="#b9cae8" opacity="0.800"><ellipse cx="296" cy="224" rx="10" ry="10"/><ellipse cx="328" cy="230" rx="20" ry="9"/><ellipse cx="310" cy="196" rx="14" ry="5" opacity="0.600"/><ellipse cx="345" cy="222" rx="10" ry="5" opacity="0.700"/></g><g filter="url(#b1)" fill="#f1f5fb"><ellipse cx="487" cy="212" rx="13" ry="14"/><ellipse cx="494" cy="236" rx="15" ry="16"/><ellipse cx="505" cy="258" rx="20" ry="16"/><ellipse cx="490" cy="270" rx="30" ry="16"/><ellipse cx="520" cy="272" rx="16" ry="10"/><ellipse cx="472" cy="192" rx="9" ry="9" opacity="0.600"/><ellipse cx="496" cy="172" rx="10" ry="4" opacity="0.350"/></g><g filter="url(#b2)" fill="#c8d6ee" opacity="0.900"><ellipse cx="500" cy="281" rx="40" ry="7"/><ellipse cx="350" cy="270" rx="60" ry="12"/><ellipse cx="545" cy="283" rx="16" ry="5"/></g><g filter="url(#b2)" fill="#e6ecf8" opacity="0.900"><ellipse cx="330" cy="262" rx="40" ry="10"/></g><linearGradient id="haze" x1="0" y1="225" x2="0" y2="283" gradientUnits="userSpaceOnUse"><stop offset="0" stop-color="#dfe7f4" stop-opacity="0"/><stop offset="0.600" stop-color="#dfe7f4" stop-opacity="0.550"/><stop offset="1" stop-color="#e4eaf4" stop-opacity="0.900"/></linearGradient><rect x="290" y="225" width="268" height="60" fill="url(#haze)"/><path d="M290 281 L330 280.500 L380 282 L470 283.500 L520 284 L558 284.500 V360 H290 Z" fill="url(#grass)"/><path d="M290 283 L558 286 V360 H290 Z" fill="#fff" filter="url(#gt)"/><path d="M290 283 L558 286 V360 H290 Z" fill="#fff" filter="url(#gd)"/><g filter="url(#b2)" opacity="0.550"><ellipse cx="325" cy="312" rx="34" ry="14" fill="#88b826"/><ellipse cx="520" cy="308" rx="24" ry="12" fill="#8cbc26"/><ellipse cx="318" cy="346" rx="26" ry="10" fill="#b6d838"/><ellipse cx="535" cy="345" rx="24" ry="12" fill="#b8da38"/><ellipse cx="540" cy="293" rx="22" ry="5" fill="#b4d83a"/></g><path d="M290 281 L330 280.500 L380 282 L470 283.500 L520 284 L558 284.500" stroke="#b4d470" stroke-width="2" fill="none" filter="url(#b05)"/><g filter="url(#b1)" fill="#fff" opacity="0.300"><path d="M371 262 C368 240 374 222 384 214 L456 182 C482 194 490 225 487 262 L481 280 L492 288 L478 318 L499 338 L500 360 L335 360 L347 334 L372 316 L363 292 L376 280 Z"/></g><path d="M 337.7 358.1 C 339.5 343.4 348.7 330.6 363.4 320.5 C 372.5 315.9 381.7 315.5 392.7 318.1 L 469.8 318.1 C 480.9 320.5 491.9 328.7 496.6 343.4 L 498.5 358.1 Z" fill="#dddbf5"/><path d="M 337.7 358.1 C 339.5 343.4 348.7 330.6 363.4 320.5 C 368.9 317.4 374.4 316.3 379.9 316.3 C 376.2 325.1 376.2 339.8 381.7 358.1 Z" fill="#fafaff" filter="url(#b05)"/><path d="M 473.5 325.1 C 484.5 330.6 491.9 339.8 494.6 358.1 L 484.5 358.1 C 482.7 343.4 479.0 334.3 473.5 325.1 Z" fill="#cfcdee" filter="url(#b05)"/><path d="M 422.1 343.4 L 440.5 343.4 L 444.1 358.1 L 418.4 358.1 Z" fill="#cdd2f2"/><path d="M 404.7 358.1 L 417.5 331.5 L 426.7 324.2 L 432.8 330.6 L 426.7 358.1 Z" fill="#f6dcd6"/><path d="M 417.5 358.1 L 423.9 332.4 L 432.8 330.6 L 426.7 358.1 Z" fill="#ecc0ba"/><path d="M 432.8 330.6 L 445.1 324.2 L 462.5 358.1 L 445.1 358.1 Z" fill="#f6dcd6"/><path d="M 432.8 330.6 L 437.7 328.4 L 452.4 358.1 L 445.1 358.1 Z" fill="#ecc0ba"/><path d="M376.500 225 L377 268 C377.600 275 380 282 387.200 290.500 C396 301 415 318.500 433.100 323.400 C445 321 456.500 311 466.200 294 C470.500 286.500 473.200 278 473.800 270 L477 225 Z" fill="#fbeee3"/><g filter="url(#b1)" fill="#f6d2c8" opacity="0.600"><ellipse cx="399" cy="291" rx="7" ry="3.500"/><ellipse cx="464" cy="293" rx="6" ry="3.500"/></g><path d="M 392.0 259.9 L 402.4 247.9 L 424.9 237.5 L 448.9 234.5 L 469.8 246.5 L 472.8 259.9 L 468.3 252.4 L 448.9 239.7 L 424.9 242.7 L 403.9 252.4 Z" fill="#f3dfd2" opacity="0.600" filter="url(#b1)"/><path d="M 365.6 293.5 C 364.8 291.7 367.0 290.6 368.5 292.4 L 379.9 307.6 C 377.1 300.3 374.0 292.0 373.6 286.9 C 373.6 284.3 376.2 284.0 377.1 286.5 L 386.9 304.9 C 385.8 297.5 385.0 291.1 385.8 286.9 C 386.1 284.7 388.7 284.7 389.1 286.9 L 393.1 301.2 C 392.4 297.5 393.1 293.5 394.9 291.3 C 396.8 289.8 398.6 291.3 397.9 293.5 L 398.2 302.1 C 405.6 306.7 418.4 315.9 425.8 325.1 L 422.1 333.3 C 405.6 330.6 390.9 323.2 382.6 314.1 Z" fill="#fbe8e1"/><path d="M 398.2 302.1 C 405.6 306.7 418.4 315.9 425.8 325.1 L 422.1 333.3 C 418.4 325.1 407.4 314.1 395.5 307.6 Z" fill="#ecbdb6"/><path d="M 379.9 307.6 L 382.6 314.1 M 386.9 304.9 L 389.1 311.3 M 393.1 301.2 L 394.2 306.7" stroke="#e8b4ae" stroke-width="0.900" fill="none"/><path d="M 365.6 293.5 C 364.8 291.7 367.0 290.6 368.5 292.4 L 379.9 307.6 M 373.6 286.9 C 373.6 284.3 376.2 284.0 377.1 286.5 L 386.9 304.9 M 385.8 286.9 C 386.1 284.7 388.7 284.7 389.1 286.9 L 393.1 301.2" stroke="#e9b9b3" stroke-width="0.500" fill="none"/><path d="M 491.0 293.5 C 491.9 291.7 489.7 290.6 488.2 292.4 L 479.9 306.7 C 482.3 300.3 484.5 292.0 484.5 287.4 C 484.5 284.7 482.0 284.3 481.2 286.9 L 475.7 302.1 C 476.4 297.5 477.6 291.1 476.4 287.6 C 475.7 285.4 473.1 285.8 473.1 288.0 L 471.7 297.5 C 469.8 293.5 466.2 292.9 466.5 296.1 C 467.6 301.2 471.7 304.9 469.8 309.5 C 462.5 315.9 449.6 320.5 436.8 325.1 L 440.5 333.3 C 455.2 331.5 469.8 325.1 476.3 315.9 Z" fill="#fbe8e1"/><path d="M 462.5 313.1 C 455.2 318.1 447.8 321.4 436.8 325.1 L 440.5 333.3 C 447.8 328.7 458.8 323.2 466.2 315.0 Z" fill="#ecbdb6"/><path d="M 471.7 297.5 C 469.8 293.5 466.2 292.9 466.5 296.1 C 467.6 301.2 471.7 304.9 469.8 309.5" stroke="#e4aaa4" stroke-width="0.700" fill="none"/><path d="M 479.9 306.7 L 477.6 312.6 M 475.7 302.1 L 474.2 307.6" stroke="#e8b4ae" stroke-width="0.900" fill="none"/><path d="M 399.2 300.3 C 407.4 307.6 420.3 318.1 433.1 323.8 C 444.1 319.9 455.2 310.8 464.0 299.4 C 447.8 292.0 418.4 292.0 399.2 300.3 Z" fill="#fbeee3"/><path d="M 400.1 301.2 C 407.4 307.6 420.3 318.1 433.1 323.8 C 444.1 319.9 455.2 310.8 463.4 300.3" stroke="#e9c3b6" stroke-width="0.700" fill="none"/><path d="M 372.5 224.0 L 427.9 180.6 L 454.9 180.6 C 466.8 186.5 475.1 197.0 478.5 207.5 C 482.6 218.0 484.8 230.0 484.8 244.5 C 485.1 255.4 483.3 265.9 477.0 275.7 L 475.1 264.4 L 472.2 258.4 L 470.1 242.7 L 468.3 250.6 L 464.7 237.5 L 461.6 246.8 L 456.8 231.5 L 453.4 240.8 L 449.8 229.2 L 443.8 242.3 L 439.6 229.2 L 436.9 240.8 L 434.6 236.0 L 430.9 242.9 L 424.9 231.5 L 419.7 243.8 L 415.3 236.0 L 409.9 245.7 L 406.3 241.2 L 402.4 258.1 L 400.3 247.2 L 396.2 260.7 L 390.2 252.4 L 391.4 264.4 L 387.5 275.2 C 381.5 270.4 377.0 264.4 375.8 256.9 C 374.9 247.9 374.9 237.5 374.0 228.5 Z" fill="#5e3f2d"/><g filter="url(#b05)" opacity="0.850" stroke-linecap="round"><path d="M 402.4 225.0 L 401.8 227.4" stroke="#74523c" stroke-width="0.99"/><path d="M 404.8 223.8 L 404.2 226.1" stroke="#96755a" stroke-width="1.18"/><path d="M 407.2 224.1 L 406.6 227.0" stroke="#96755a" stroke-width="0.87"/><path d="M 409.5 222.3 L 409.0 224.7" stroke="#7d5b44" stroke-width="1.27"/><path d="M 411.9 221.1 L 411.4 225.2" stroke="#96755a" stroke-width="1.18"/><path d="M 414.3 220.7 L 413.8 223.7" stroke="#96755a" stroke-width="0.75"/><path d="M 416.7 220.7 L 416.2 224.7" stroke="#7d5b44" stroke-width="0.81"/><path d="M 418.9 219.6 L 418.6 222.0" stroke="#96755a" stroke-width="0.70"/><path d="M 421.3 218.7 L 421.0 222.9" stroke="#96755a" stroke-width="1.21"/><path d="M 423.7 218.4 L 423.4 221.9" stroke="#96755a" stroke-width="0.96"/><path d="M 426.1 217.2 L 425.8 220.4" stroke="#8e6c52" stroke-width="0.75"/><path d="M 428.4 217.4 L 428.2 222.5" stroke="#74523c" stroke-width="1.12"/><path d="M 430.7 216.3 L 430.6 220.5" stroke="#8e6c52" stroke-width="0.95"/><path d="M 433.1 216.2 L 433.0 220.1" stroke="#96755a" stroke-width="0.81"/><path d="M 435.5 216.3 L 435.4 220.2" stroke="#7d5b44" stroke-width="1.24"/><path d="M 437.8 215.6 L 437.8 217.8" stroke="#7d5b44" stroke-width="0.87"/><path d="M 440.2 216.3 L 440.2 221.0" stroke="#8e6c52" stroke-width="0.90"/><path d="M 442.6 215.6 L 442.6 219.0" stroke="#8e6c52" stroke-width="0.91"/><path d="M 445.0 215.6 L 445.0 220.5" stroke="#96755a" stroke-width="1.14"/><path d="M 447.2 217.2 L 447.4 219.5" stroke="#96755a" stroke-width="0.89"/><path d="M 449.6 216.0 L 449.8 220.1" stroke="#8e6c52" stroke-width="0.88"/><path d="M 452.0 216.5 L 452.2 219.9" stroke="#7d5b44" stroke-width="0.85"/><path d="M 454.4 217.5 L 454.6 220.2" stroke="#8e6c52" stroke-width="0.92"/><path d="M 456.7 217.8 L 457.0 221.0" stroke="#96755a" stroke-width="1.30"/><path d="M 459.1 218.6 L 459.4 222.0" stroke="#7d5b44" stroke-width="0.95"/><path d="M 461.5 218.6 L 461.8 220.8" stroke="#8e6c52" stroke-width="1.14"/><path d="M 463.8 219.9 L 464.1 224.9" stroke="#8e6c52" stroke-width="1.03"/><path d="M 466.1 220.5 L 466.5 223.7" stroke="#8e6c52" stroke-width="0.77"/><path d="M 468.5 221.3 L 468.9 225.6" stroke="#74523c" stroke-width="1.09"/><path d="M 470.9 221.4 L 471.3 224.1" stroke="#74523c" stroke-width="0.95"/><path d="M 473.3 222.0 L 473.7 225.3" stroke="#7d5b44" stroke-width="1.09"/><path d="M 475.5 223.5 L 476.1 226.4" stroke="#7d5b44" stroke-width="0.72"/><path d="M 477.9 224.1 L 478.5 227.0" stroke="#7d5b44" stroke-width="1.16"/><path d="M 480.3 225.3 L 480.9 228.2" stroke="#96755a" stroke-width="0.73"/></g><path d="M 378.5 233.0 C 376.7 245.0 377.0 258.4 383.0 268.9" stroke="#6f4e3a" stroke-width="1.600" fill="none" filter="url(#b05)"/><path d="M 402.1 258.9 C 408.4 253.2 422.7 251.7 431.2 260.2 C 422.7 256.3 409.9 257.2 402.1 258.9 Z" fill="#4c3022" stroke="#4c3022" stroke-width="0.800" stroke-linejoin="round"/><path d="M 447.8 261.0 C 453.4 255.7 465.6 255.1 472.5 263.5 C 465.3 259.5 454.9 259.6 447.8 261.0 Z" fill="#4c3022" stroke="#4c3022" stroke-width="0.800" stroke-linejoin="round"/><path d="M 402.4 270.1 C 408.4 265.2 418.9 265.2 424.2 271.9 C 422.7 277.9 417.4 280.9 411.4 279.7 C 406.9 278.7 403.6 274.9 402.4 270.1 Z" fill="#fdfaf7"/><ellipse cx="414.7" cy="273.1" rx="6" ry="6.600" fill="#7a4f2f"/><ellipse cx="414.7" cy="271.9" rx="3.600" ry="4" fill="#3c2414"/><ellipse cx="415.2" cy="277.6" rx="3" ry="1.600" fill="#b58a6a"/><path d="M 399.4 267.4 L 404.2 267.7 C 409.9 263.7 418.9 264.4 424.6 272.2 C 417.4 267.4 409.9 267.4 404.2 270.1 Z" fill="#35201a"/><circle cx="411.7" cy="268.6" r="1.100" fill="#fff"/><path d="M 449.2 274.6 C 453.4 269.7 463.8 269.2 469.1 274.6 C 466.8 279.7 462.3 282.1 457.1 281.6 C 453.4 280.9 450.4 278.7 449.2 274.6 Z" fill="#fdfaf7"/><ellipse cx="456.7" cy="276.4" rx="5.500" ry="6.200" fill="#7a4f2f"/><ellipse cx="456.7" cy="275.2" rx="3.300" ry="3.700" fill="#3c2414"/><ellipse cx="456.4" cy="280.6" rx="2.800" ry="1.500" fill="#b58a6a"/><path d="M 448.3 274.9 C 453.4 268.2 463.8 268.2 471.0 275.2 L 468.3 274.6 C 462.3 271.2 454.9 271.6 448.3 274.9 Z" fill="#35201a"/><circle cx="454.3" cy="272.7" r="1" fill="#fff"/><path d="M 435.0 289.8 C 436.4 292.9 438.3 294.8 439.5 296.1" stroke="#efb3a6" stroke-width="1.700" stroke-linecap="round" fill="none" filter="url(#b03)"/><path d="M 419.4 300.8 C 425.8 303.4 440.5 304.9 448.2 302.7 C 444.1 307.6 431.3 310.8 419.4 300.8 Z" fill="#ea9c8a"/><path d="M 423.0 302.7 C 429.5 304.9 438.6 305.2 445.1 303.8" stroke="#fff3ee" stroke-width="0.900" fill="none"/><g filter="url(#b03)"><polygon points="286,240.300 468,151 548,151 517.600,155.600 286,267.600" fill="#e2e2e2"/><polygon points="286,240.300 468,151 474,151 286,243.500" fill="#f4f4f4"/><polygon points="286,246.500 482,151 492,151 286,251" fill="#cfcfcf"/><polygon points="286,252.500 496,151 514,151 286,261" fill="#fdfdfd"/><polygon points="286,261 514,151 520,151 517.600,153 286,264.500" fill="#cccccc"/><polygon points="286,264.500 517.600,153.200 517.600,155.600 286,267.600" fill="#adadad"/><polygon points="517.600,155.600 519,151 546.500,151 560,175 560,231" fill="#e4e4e4"/><polygon points="517.600,155.600 521.500,154.500 560,222 560,231" fill="#bdbdbd"/><polygon points="529,151 538,151 560,192 560,208" fill="#f6f6f6"/><polygon points="544,151 546.500,151 560,175 560,180" fill="#f8f8f8"/></g><g fill="none" stroke="#c2c2c2" stroke-width="0.800" filter="url(#b03)"><path d="M292 248 c2 -3 6 -3 6 0 c0 3 -4 3 -4 0.500 M300 246 c2 -3 7 -4 8 -1 c1 3 -4 4 -5 1 M294 256 c3 -3 8 -4 12 -7 M310 243 c3 -2 6 -1 6 1"/><path d="M472 158 c3 -3 8 -4 10 -1 M484 154 c3 -2 7 -2 8 0 M496 156 c2 -3 6 -4 9 -2 M528 160 c3 2 4 6 3 9 M536 170 c3 3 4 7 3 10 M544 184 c3 3 4 7 3 10 M550 160 c2 3 4 6 6 10"/></g></g></svg>
<svg style="left:0;top:0" width="1024" height="501" viewBox="0 0 1024 501"><rect x="190.2" y="110.3" width="493.00000000000006" height="348.9" fill="none" stroke="#8c8c8c" stroke-width="0.800"/><rect x="187.90" y="108.00" width="4.600" height="4.600" fill="#fff" stroke="#6e6e6e" stroke-width="0.800"/><rect x="434.40" y="108.00" width="4.600" height="4.600" fill="#fff" stroke="#6e6e6e" stroke-width="0.800"/><rect x="680.90" y="108.00" width="4.600" height="4.600" fill="#fff" stroke="#6e6e6e" stroke-width="0.800"/><rect x="187.90" y="282.45" width="4.600" height="4.600" fill="#fff" stroke="#6e6e6e" stroke-width="0.800"/><rect x="680.90" y="282.45" width="4.600" height="4.600" fill="#fff" stroke="#6e6e6e" stroke-width="0.800"/><rect x="187.90" y="456.90" width="4.600" height="4.600" fill="#fff" stroke="#6e6e6e" stroke-width="0.800"/><rect x="434.40" y="456.90" width="4.600" height="4.600" fill="#fff" stroke="#6e6e6e" stroke-width="0.800"/><rect x="680.90" y="456.90" width="4.600" height="4.600" fill="#fff" stroke="#6e6e6e" stroke-width="0.800"/></svg>
<svg style="left:0;top:0" width="1024" height="501" viewBox="0 0 1024 501"><rect x="434.600" y="282.400" width="3.600" height="3.600" fill="#fff" stroke="#777" stroke-width="0.700"/></svg>
<div class="a" id="tb"></div>
<div class="a" style="left:0;top:51px;width:19.300px;height:15.500px;background:#5e5e5e;border-radius:0 2px 2px 0"></div>
<div class="a" style="left:0;top:51px;width:1.400px;height:15.500px;background:#4a8af0"></div>
<svg style="left:0;top:0" width="24" height="501" viewBox="0 0 24 501" fill="none" stroke="none"><defs><linearGradient id="tg" x1="0" x2="1" y1="0" y2="0"><stop offset="0" stop-color="#dadada"/><stop offset="1" stop-color="#555"/></linearGradient></defs><g transform="translate(10.500 59.00)"><path d="M-5.500 -5.500 L-5.500 4 L-3.100 1.900 L-1.500 5.500 L0 4.800 L-1.500 1.400 L1.600 1.400 Z" fill="#dadada"/><path d="M3.800 0.500V6.300M0.900 3.400H6.700" stroke="#dadada" stroke-width="0.900"/></g><path d="M18.300 66.50 L18.300 64.20 L16 66.50 Z" fill="#c4c4c4"/><g transform="translate(10.500 76.22)"><rect x="-5.300" y="-4.600" width="11" height="9.200" stroke="#dadada" stroke-width="1.100" stroke-dasharray="2.400 1.500"/></g><path d="M18.300 83.72 L18.300 81.42 L16 83.72 Z" fill="#c4c4c4"/><g transform="translate(10.500 93.44)"><ellipse cx="0.300" cy="-1.300" rx="5.400" ry="3.700" stroke="#dadada" stroke-width="1.100"/><path d="M-3 1.500 C-4.800 2.500 -3.800 5 -1.600 4.200" stroke="#dadada" stroke-width="1"/><path d="M-3.500 0.500 L-1.500 2.800 L-4.200 3 Z" fill="#dadada"/></g><path d="M18.300 100.94 L18.300 98.64 L16 100.94 Z" fill="#c4c4c4"/><g transform="translate(10.500 110.66)"><path d="M-1.200 -0.800 L5.300 5.700" stroke="#dadada" stroke-width="1.600" stroke-linecap="round"/><path d="M-3.300 -5.800V-0.400M-6 -3.100H-0.600M-5.200 -5L-1.400 -1.200M-1.400 -5L-5.200 -1.200" stroke="#dadada" stroke-width="0.750"/></g><path d="M18.300 118.16 L18.300 115.86 L16 118.16 Z" fill="#c4c4c4"/><g transform="translate(10.500 127.88)"><path d="M-3.200 -6V3.200H6.300M-6.300 -3.200H3.200V6.200" stroke="#dadada" stroke-width="1.400"/></g><path d="M18.300 135.38 L18.300 133.08 L16 135.38 Z" fill="#c4c4c4"/><g transform="translate(10.500 145.10)"><path d="M-5.300 5.500 L-4.600 2.600 L0.500 -2.500 L2.300 -0.700 L-2.800 4.400 Z" stroke="#dadada" stroke-width="0.900"/><path d="M0 -4 L3.800 -0.200" stroke="#dadada" stroke-width="1.500"/><path d="M1.500 -2.500 L3.500 -5 C4.500 -6 6 -4.500 5 -3.500 L2.800 -1.200 Z" fill="#dadada" stroke="#dadada" stroke-width="0.800"/></g><path d="M18.300 152.60 L18.300 150.30 L16 152.60 Z" fill="#c4c4c4"/><g transform="translate(10.500 162.32)"><g transform="translate(-0.500 0.800) rotate(45) scale(0.860)"><rect x="-6.500" y="-2.900" width="13" height="5.800" rx="2.700" stroke="#dadada" stroke-width="1.200"/><rect x="-2.200" y="-2.900" width="4.400" height="5.800" fill="#dadada"/></g><path d="M3.600 -6.300V-2.900M1.900 -4.600H5.300" stroke="#dadada" stroke-width="0.900"/></g><path d="M18.300 169.82 L18.300 167.52 L16 169.82 Z" fill="#c4c4c4"/><g transform="translate(10.500 179.54)"><path d="M4.800 -5.800 L5.900 -4.700 L2.600 0 L0.800 -1.500 Z M0.100 -1.800 L3.200 1 C2.100 4.200 -1.500 5.900 -5.500 5.600 C-5.100 2.100 -3.100 -0.500 0.100 -1.800 Z" fill="#dadada"/></g><path d="M18.300 187.04 L18.300 184.74 L16 187.04 Z" fill="#c4c4c4"/><g transform="translate(10.500 196.76)"><path d="M-2 -6 H2.200 V-2.200 L3.200 0.600 H5.800 V3.400 H-5.800 V0.600 H-3 L-2 -2.200 Z M-5.800 4.800 H5.800 V6.200 H-5.800 Z" fill="#dadada"/></g><path d="M18.300 204.26 L18.300 201.96 L16 204.26 Z" fill="#c4c4c4"/><g transform="translate(10.500 213.98)"><g transform="rotate(-45) scale(0.860)"><rect x="-6.500" y="-3.300" width="13" height="6.600" rx="3" stroke="#dadada" stroke-width="1.200"/><path d="M0 -3.300 H3.500 A3 3 0 0 1 3.500 3.300 H0 Z" fill="#dadada"/></g></g><path d="M18.300 221.48 L18.300 219.18 L16 221.48 Z" fill="#c4c4c4"/><g transform="translate(10.500 231.20)"><rect x="-6" y="-4.500" width="12" height="9" fill="url(#tg)"/></g><path d="M18.300 238.70 L18.300 236.40 L16 238.70 Z" fill="#c4c4c4"/><g transform="translate(10.500 248.42)"><path d="M0 -6 C2 -3 4.300 -0.200 4.300 2.400 A4.300 4.300 0 0 1 -4.300 2.400 C-4.300 -0.200 -2 -3 0 -6 Z" fill="#dadada"/><circle cx="1" cy="3" r="1.400" fill="#474747"/></g><path d="M18.300 255.92 L18.300 253.62 L16 255.92 Z" fill="#c4c4c4"/><g transform="translate(10.500 265.64)"><circle cx="2" cy="-2.500" r="3.600" fill="#dadada"/><path d="M-0.500 0 L-5 5.500" stroke="#dadada" stroke-width="1.500" stroke-linecap="round"/></g><path d="M18.300 273.14 L18.300 270.84 L16 273.14 Z" fill="#c4c4c4"/><g transform="translate(10.500 282.86)"><text x="0" y="5.600" text-anchor="middle" font-family="Liberation Serif, serif" font-size="16" font-weight="bold" fill="#dadada">T</text></g><path d="M18.300 290.36 L18.300 288.06 L16 290.36 Z" fill="#c4c4c4"/><g transform="translate(10.500 300.08)"><path d="M-6 6.200 L-4.600 0 L0.200 -2.800 L3 0 L0.200 4.800 Z M1.200 -3.800 L3.600 -6.200 L6.400 -3.400 L4 -1 Z" fill="#dadada"/><circle cx="-1.700" cy="1.900" r="0.900" fill="#474747"/></g><path d="M18.300 307.58 L18.300 305.28 L16 307.58 Z" fill="#c4c4c4"/><g transform="translate(10.500 317.30)"><path d="M-5.500 -5.500 L-5.500 4 L-3.100 1.900 L-1.500 5.500 L0 4.800 L-1.500 1.400 L1.600 1.400 Z" stroke="#dadada" stroke-width="0.900"/><path d="M2 -0.500 L5.500 3 M5.500 -0.500 L2 3" stroke="#dadada" stroke-width="0.800"/></g><path d="M18.300 324.80 L18.300 322.50 L16 324.80 Z" fill="#c4c4c4"/><g transform="translate(10.500 334.52)"><rect x="-6" y="-4.500" width="12" height="9" rx="0.800" fill="#dadada"/></g><path d="M18.300 342.02 L18.300 339.72 L16 342.02 Z" fill="#c4c4c4"/><g transform="translate(10.500 351.74)"><path d="M-3.300 1 V-3.500 C-3.300 -4.700 -1.800 -4.700 -1.800 -3.500 V-5.200 C-1.800 -6.400 -0.200 -6.400 -0.200 -5.200 V-5.700 C-0.200 -6.900 1.400 -6.900 1.400 -5.700 V-4.500 C1.400 -5.600 3 -5.600 3 -4.500 V2 C3 5 1.700 6.500 -0.300 6.500 C-2.300 6.500 -3.300 5.500 -4.500 3.500 L-6 0.500 C-6.400 -0.500 -5.200 -1 -4.500 -0.200 Z" fill="#dadada"/></g><path d="M18.300 359.24 L18.300 356.94 L16 359.24 Z" fill="#c4c4c4"/><g transform="translate(10.500 368.96)"><circle cx="-1.700" cy="-2" r="3.600" stroke="#dadada" stroke-width="1.500"/><path d="M1 0.800 L5.300 5.100" stroke="#dadada" stroke-width="2" stroke-linecap="round"/></g><rect x="8.400" y="388" width="10.600" height="10.500" rx="1.800" fill="#000"/><rect x="1.800" y="380.800" width="10.600" height="10.600" rx="1.800" fill="#7b7b7b" stroke="#474747" stroke-width="0.800"/><rect x="13.200" y="380.300" width="3" height="3" fill="#000"/><rect x="15.300" y="382.300" width="3.200" height="3.200" fill="#fff"/><path d="M3 396 V394 H5.500 M7 397.500 V399.500 H4.500" stroke="#a8bcc8" stroke-width="0.800"/><rect x="5" y="402.800" width="11.400" height="8.200" fill="#dadada"/><ellipse cx="10.700" cy="406.900" rx="2.800" ry="2.600" fill="#474747"/><rect x="5" y="417" width="11.400" height="7" fill="#dadada"/><path d="M6.500 419H15 M6.500 420.500H15" stroke="#474747" stroke-width="0.700" stroke-dasharray="1 0.500"/><path d="M7.500 422.500H14" stroke="#474747" stroke-width="0.700"/></svg>
<div class="t" style="left:858.600px;top:47.500px;font-size:7.200px;font-weight:bold;color:#e4e4e4;letter-spacing:0.900px;transform:scaleX(0.720);transform-origin:0 0">&lt;&gt;</div>
<div class="t" style="left:944.500px;top:47.500px;font-size:7.200px;font-weight:bold;color:#e4e4e4;letter-spacing:0.900px;transform:scaleX(0.720);transform-origin:0 0">&gt;&lt;</div>
<div class="a" style="left:852px;top:55px;width:21.200px;height:37px;background:#474747"></div>
<div class="a" style="left:852px;top:94.4px;width:21.200px;height:19.799999999999997px;background:#474747"></div>
<div class="a" style="left:852px;top:116.4px;width:21.200px;height:53.400000000000006px;background:#474747"></div>
<div class="a" style="left:852px;top:172.4px;width:21.200px;height:68.6px;background:#474747"></div>
<div class="a" style="left:852px;top:243.6px;width:21.200px;height:276.4px;background:#474747"></div>
<svg style="left:852px;top:0" width="22" height="260" viewBox="852 0 22 260" fill="none">
<circle cx="862.600" cy="64.600" r="5" stroke="#e2e2e2" stroke-width="1"/><path d="M862.600 63.800V67.600" stroke="#e2e2e2" stroke-width="1.200"/><circle cx="862.600" cy="62" r="0.700" fill="#e2e2e2"/>
<path d="M857.300 79H868M857.300 82.400H868M857.300 85.800H868" stroke="#e2e2e2" stroke-width="0.900"/><path d="M860.500 77.800V80.200M865 81.200V83.600M861.500 84.600V87" stroke="#e2e2e2" stroke-width="1.500"/>
<path d="M867.300 98.600 L868.200 99.600 L865 104 L863.300 102.600 Z" fill="#e2e2e2"/><path d="M862.600 102.300 L865.600 105 C864.500 108 861 109.600 857.200 109.300 C857.600 106 859.500 103.500 862.600 102.300 Z" fill="#e2e2e2"/><path d="M857.300 99.300H861M857.300 100.600H861M857.300 101.900H861" stroke="#c0c0c0" stroke-width="0.700" stroke-dasharray="0.800 0.450"/>
<text transform="translate(862.300 131.200) scale(0.740 1)" text-anchor="middle" font-family="Liberation Serif, serif" font-size="17" fill="#e2e2e2" letter-spacing="-0.600">Tt</text>
<text transform="translate(861.700 147.100) scale(1.250 1)" text-anchor="middle" font-family="Liberation Serif, serif" font-size="15.500" font-weight="bold" fill="#e2e2e2">¶</text>
<path d="M857.400 155.700 L862.500 160.900" stroke="#e2e2e2" stroke-width="1.100" stroke-linecap="round"/><path d="M862.800 161.200 L867.200 165.400" stroke="#e2e2e2" stroke-width="2.300" stroke-linecap="round"/><path d="M865.300 158.600 L858 165.500" stroke="#e2e2e2" stroke-width="1.800" stroke-linecap="round"/><path d="M864.300 156.300 A2.200 2.200 0 1 0 867.800 159.300" stroke="#e2e2e2" stroke-width="1.500" fill="none"/>
<text x="862.400" y="184.200" text-anchor="middle" font-family="Liberation Sans, sans-serif" font-size="6.100" font-weight="bold" fill="#e2e2e2" letter-spacing="0">CSS</text>
<rect x="858.200" y="195" width="3.200" height="10.500" stroke="#e2e2e2" stroke-width="0.800"/><path d="M859 197.500H860.500M859 200H860.500M859 202.500H860.500" stroke="#e2e2e2" stroke-width="0.600"/><path d="M865.500 196V204.500" stroke="#e2e2e2" stroke-width="0.900"/><path d="M863.800 197.500L865.500 195L867.200 197.500ZM863.800 203L865.500 205.500L867.200 203Z" fill="#e2e2e2"/>
<text x="856.500" y="218.900" font-family="Liberation Sans, sans-serif" font-size="7.300" fill="#e2e2e2">Mem</text>
<rect x="857" y="227.500" width="11.200" height="9" rx="0.800" fill="#e2e2e2"/><path d="M858.200 235.300 L861.300 231.300 L863.400 233.600 L864.900 232.200 L867 235.300 Z" fill="#474747"/><circle cx="865.500" cy="230" r="0.850" fill="#474747"/>
</svg>
<div class="a" style="left:875.400px;top:68.700px;width:160px;height:440px;background:#474747"></div>
<div class="a" style="left:875.400px;top:55px;width:36px;height:15px;background:#474747;border-radius:2px 2px 0 0"></div>
<div class="t" style="left:878.700px;top:57.200px;color:#dedede">レイヤー</div>
<div class="a" style="left:1010.800px;top:55.300px;width:11.300px;height:12.500px;background:#4b4b4b;border-radius:1.500px 0 0 1.500px"></div>
<svg style="left:1014.800px;top:59px" width="4" height="3.800" viewBox="0 0 5 5"><path d="M0 0.700H5M0 2.500H5M0 4.300H5" stroke="#a0a0a0" stroke-width="0.950"/></svg>
<div class="a" style="left:1022.100px;top:0;width:100px;height:600px;background:#474747"></div>
<div class="a" style="left:876.300px;top:70.500px;width:79px;height:13.600px;background:#262626;border-radius:2px"></div>
<div class="t" style="left:880.200px;top:72.400px">通常</div>
<svg style="left:946.500px;top:75.500px" width="6" height="4" viewBox="0 0 6 4"><path d="M0.600 0.600 L3 3 L5.400 0.600" fill="none" stroke="#d8d8d8" stroke-width="0.900"/></svg>
<div class="t" style="left:876.800px;top:87.800px">不透明度:</div>
<div class="a" style="left:907.600px;top:86.200px;width:23.200px;height:13.200px;background:#262626;border-radius:2px"></div>
<div class="t" style="left:910.500px;top:87.900px;color:#e6e6e6">100%</div>
<svg style="left:932.800px;top:90.300px" width="5.600" height="5.400" viewBox="0 0 6 6"><path d="M0 0.300H6L3 5.800Z" fill="#f0f0f0"/></svg>
<div class="t" style="left:876.800px;top:102.300px">レイヤーをロック:</div>
<svg style="left:939.200px;top:103.300px" width="7.600" height="7.600" viewBox="0 0 8 8"><rect width="8" height="8" rx="0.800" fill="#e6e6e6"/><path d="M1 1h2v2h-2zM5 1h2v2h-2zM3 3h2v2h-2zM1 5h2v2h-2zM5 5h2v2h-2z" fill="#474747"/></svg>
<svg style="left:949.600px;top:102.600px" width="8" height="9" viewBox="0 0 8 9"><path d="M0.400 8.600 C0.400 6 1.300 5 2.800 5 L4.400 6.600 C3.800 8.200 2.200 8.900 0.400 8.600 Z M3.400 4.400 L6.400 0.600 C7.100 -0.100 8.100 0.900 7.500 1.600 L4.900 5.900 Z" fill="#e6e6e6"/></svg>
<svg style="left:960px;top:103px" width="8.400" height="8.400" viewBox="0 0 9 9"><path d="M4.500 0.800V8.200M0.800 4.500H8.200" stroke="#e6e6e6" stroke-width="0.800"/><path d="M3.300 1.900L4.500 0.200L5.700 1.900ZM3.300 7.100L4.500 8.800L5.700 7.100ZM1.900 3.300L0.200 4.500L1.900 5.700ZM7.100 3.300L8.800 4.500L7.100 5.700Z" fill="#e6e6e6"/></svg>
<svg style="left:971.2px;top:102.7px" width="7.6" height="8.6" viewBox="0 0 8 9"><rect x="0.300" y="3.800" width="7.400" height="5.200" rx="0.600" fill="#e6e6e6"/><path d="M1.800 4 V2.600 A2.200 2.200 0 0 1 6.200 2.600 V4" fill="none" stroke="#e6e6e6" stroke-width="1.200"/></svg>
<div class="t" style="left:876.800px;top:116.400px">フィル:</div>
<div class="a" style="left:900.800px;top:114.300px;width:23px;height:13.400px;background:#262626;border-radius:2px"></div>
<div class="t" style="left:903.500px;top:116.200px;color:#e6e6e6">100%</div>
<svg style="left:925.800px;top:118.500px" width="5.600" height="5.400" viewBox="0 0 6 6"><path d="M0 0.300H6L3 5.800Z" fill="#f0f0f0"/></svg>
<div class="a" style="left:875.400px;top:130px;width:146px;height:0.600px;background:#555"></div>
<div class="a" style="left:875.400px;top:131px;width:141.300px;height:16.700px;background:#5e5e5e"></div>
<svg style="left:878.3px;top:135.9px" width="9" height="7" viewBox="0 0 9 7"><path d="M0.500 3.500 C1.500 1.300 3 0.600 4.500 0.600 C6 0.600 7.500 1.300 8.500 3.500 C7.500 5.700 6 6.400 4.500 6.400 C3 6.400 1.500 5.700 0.500 3.500 Z" fill="none" stroke="#cfcfcf" stroke-width="0.800"/><circle cx="4.500" cy="3.500" r="1.600" fill="#cfcfcf"/><circle cx="5" cy="3" r="0.550" fill="#555"/></svg>
<svg style="left:892.3px;top:132.6px" width="18.4" height="13.2" viewBox="0 0 36 26" preserveAspectRatio="none"><rect width="36" height="26" fill="#fff"/><rect x="3" y="3" width="30" height="10" fill="#4f8fe6"/><rect x="3" y="12.500" width="30" height="10.500" fill="#a6cf34"/><ellipse cx="8" cy="8" rx="5" ry="4" fill="#e4ebf7"/><ellipse cx="25" cy="10.500" rx="4.500" ry="3" fill="#e4ebf7"/><path d="M3 11.500 L20 3 L24 3 L3 14 Z" fill="#e2e6ee" opacity="0.900"/><path d="M26 3 L29 3 L33 10 L33 13 Z" fill="#e2e6ee" opacity="0.900"/><ellipse cx="18" cy="10.500" rx="3.600" ry="3.200" fill="#76523e"/><ellipse cx="18" cy="12.800" rx="2.800" ry="2.600" fill="#f6e2d8"/><path d="M13.500 21 C14 15.500 22 15.500 22.500 21 Z" fill="#ecdcec"/><path d="M8 15 L10 20 L12 16 M24 15 L25.500 19.500 L27.500 16" stroke="#eef4dc" stroke-width="0.900" fill="none"/></svg>
<svg style="left:912px;top:134.600px" width="4.200" height="9.600" viewBox="0 0 4.200 9.600" fill="none" stroke="#dadada" stroke-width="1"><rect x="0.600" y="0.600" width="3" height="3.200" rx="0.900"/><rect x="0.600" y="5.800" width="3" height="3.200" rx="0.900"/><path d="M2.100 2.800V6.800" stroke-width="0.800"/></svg>
<div class="a" style="left:917.300px;top:132.300px;width:20.300px;height:14px;background:#474747"></div>
<svg style="left:916.800px;top:131.800px" width="21.300" height="15" viewBox="0 0 21.300 15"><rect x="0.500" y="0.500" width="20.300" height="14" fill="none" stroke="#f4f4f4" stroke-width="0.900" stroke-dasharray="1.600 1.100"/></svg>
<svg style="left:891.800px;top:132.100px" width="19.400" height="14.200" viewBox="0 0 19.400 14.200"><rect x="0.500" y="0.500" width="18.400" height="13.200" fill="none" stroke="#202020" stroke-width="0.900"/><rect x="0.500" y="0.500" width="18.400" height="13.200" fill="none" stroke="#f4f4f4" stroke-width="0.900" stroke-dasharray="1.600 1.100"/></svg>
<div class="t" style="left:942.300px;top:134.600px;font-size:7.200px;color:#d6d6d6">493949_m</div>
<svg style="left:878.3px;top:153.2px" width="9" height="7" viewBox="0 0 9 7"><path d="M0.500 3.500 C1.500 1.300 3 0.600 4.500 0.600 C6 0.600 7.500 1.300 8.500 3.500 C7.500 5.700 6 6.400 4.500 6.400 C3 6.400 1.500 5.700 0.500 3.500 Z" fill="none" stroke="#cfcfcf" stroke-width="0.800"/><circle cx="4.500" cy="3.500" r="1.600" fill="#cfcfcf"/><circle cx="5" cy="3" r="0.550" fill="#555"/></svg>
<div class="a" style="left:892.300px;top:150.300px;width:18.400px;height:12.600px;background:#fff"></div>
<div class="t" style="left:916px;top:151.900px;font-size:7.200px;color:#d6d6d6">Background</div>
<svg style="left:1007.8px;top:152.6px" width="7.6" height="8.6" viewBox="0 0 8 9"><rect x="0.300" y="3.800" width="7.400" height="5.200" rx="0.600" fill="#8c8c8c"/><path d="M1.800 4 V2.600 A2.200 2.200 0 0 1 6.200 2.600 V4" fill="none" stroke="#8c8c8c" stroke-width="1.200"/></svg>
<div class="a" style="left:875.400px;top:483.800px;width:146px;height:0.700px;background:#3a3a3a"></div>
<svg style="left:920px;top:486px" width="104" height="15" viewBox="920 486 104 15" fill="none"><rect x="926.300" y="491.400" width="3.600" height="3.200" rx="1.200" stroke="#dcdcdc" stroke-width="0.900"/><rect x="930.300" y="491.400" width="3.600" height="3.200" rx="1.200" stroke="#dcdcdc" stroke-width="0.900"/><text x="938.800" y="496" font-family="Liberation Sans, sans-serif" font-size="8.300" fill="#b8b8b8">eff</text><path d="M949.300 497.300V495.500L947.500 497.300Z" fill="#b8b8b8"/><circle cx="957.300" cy="493" r="3.800" stroke="#dcdcdc" stroke-width="0.900"/><path d="M957.300 489.200A3.800 3.800 0 0 0 957.300 496.800Z" fill="#dcdcdc"/><path d="M962.800 497.300V495.500L961 497.300Z" fill="#b8b8b8"/><rect x="967" y="489.600" width="8.600" height="6.600" fill="#dcdcdc"/><circle cx="971.300" cy="492.900" r="2" fill="#474747"/><path d="M980.600 489.500H984L985 490.600H989.400V496.400H980.600Z" fill="#dcdcdc"/><path d="M994.600 489.400H1002.500V496.600H997L994.600 494.300Z" stroke="#dcdcdc" stroke-width="0.900"/><path d="M994.600 494.300H997V496.600" stroke="#dcdcdc" stroke-width="0.700"/><path d="M1008.600 490.300H1016.400L1015.500 497H1009.500Z" fill="#dcdcdc"/><path d="M1008.200 489.400H1016.800" stroke="#dcdcdc" stroke-width="0.900"/></svg>
<div class="a" style="left:585.6px;top:251.7px;width:191.3px;height:216.4px;overflow:hidden;background:#262626;box-shadow:0 0 0 0.800px #909090"><div class="a" style="left:-837.70px;top:-36.40px;width:1100px;height:600px"><div class="a" style="left:0;top:0;width:1100px;height:48.900px;background:#474747"></div><svg style="left:820px;top:60px" width="32" height="20" viewBox="820 60 32 20"><path d="M836 76.200H851" stroke="#777" stroke-width="0.600"/><path d="M838 75.300V76.500M840 75.300V76.500M842 75.300V76.500M844 75.300V76.500M846 75.300V76.500M848 75.300V76.500M849.800 71V76.500M845.600 71.500V75" stroke="#8a8a8a" stroke-width="0.700"/><text x="838.500" y="75" font-size="5.600" fill="#9a9a9a" font-family="Liberation Sans, sans-serif">0</text></svg><div class="t" style="left:858.600px;top:47.500px;font-size:7.200px;font-weight:bold;color:#e4e4e4;letter-spacing:0.900px;transform:scaleX(0.720);transform-origin:0 0">&lt;&gt;</div>
<div class="t" style="left:944.500px;top:47.500px;font-size:7.200px;font-weight:bold;color:#e4e4e4;letter-spacing:0.900px;transform:scaleX(0.720);transform-origin:0 0">&gt;&lt;</div>
<div class="a" style="left:852px;top:55px;width:21.200px;height:37px;background:#474747"></div>
<div class="a" style="left:852px;top:94.4px;width:21.200px;height:19.799999999999997px;background:#474747"></div>
<div class="a" style="left:852px;top:116.4px;width:21.200px;height:53.400000000000006px;background:#474747"></div>
<div class="a" style="left:852px;top:172.4px;width:21.200px;height:68.6px;background:#474747"></div>
<div class="a" style="left:852px;top:243.6px;width:21.200px;height:276.4px;background:#474747"></div>
<svg style="left:852px;top:0" width="22" height="260" viewBox="852 0 22 260" fill="none">
<circle cx="862.600" cy="64.600" r="5" stroke="#e2e2e2" stroke-width="1"/><path d="M862.600 63.800V67.600" stroke="#e2e2e2" stroke-width="1.200"/><circle cx="862.600" cy="62" r="0.700" fill="#e2e2e2"/>
<path d="M857.300 79H868M857.300 82.400H868M857.300 85.800H868" stroke="#e2e2e2" stroke-width="0.900"/><path d="M860.500 77.800V80.200M865 81.200V83.600M861.500 84.600V87" stroke="#e2e2e2" stroke-width="1.500"/>
<path d="M867.300 98.600 L868.200 99.600 L865 104 L863.300 102.600 Z" fill="#e2e2e2"/><path d="M862.600 102.300 L865.600 105 C864.500 108 861 109.600 857.200 109.300 C857.600 106 859.500 103.500 862.600 102.300 Z" fill="#e2e2e2"/><path d="M857.300 99.300H861M857.300 100.600H861M857.300 101.900H861" stroke="#c0c0c0" stroke-width="0.700" stroke-dasharray="0.800 0.450"/>
<text transform="translate(862.300 131.200) scale(0.740 1)" text-anchor="middle" font-family="Liberation Serif, serif" font-size="17" fill="#e2e2e2" letter-spacing="-0.600">Tt</text>
<text transform="translate(861.700 147.100) scale(1.250 1)" text-anchor="middle" font-family="Liberation Serif, serif" font-size="15.500" font-weight="bold" fill="#e2e2e2">¶</text>
<path d="M857.400 155.700 L862.500 160.900" stroke="#e2e2e2" stroke-width="1.100" stroke-linecap="round"/><path d="M862.800 161.200 L867.200 165.400" stroke="#e2e2e2" stroke-width="2.300" stroke-linecap="round"/><path d="M865.300 158.600 L858 165.500" stroke="#e2e2e2" stroke-width="1.800" stroke-linecap="round"/><path d="M864.300 156.300 A2.200 2.200 0 1 0 867.800 159.300" stroke="#e2e2e2" stroke-width="1.500" fill="none"/>
<text x="862.400" y="184.200" text-anchor="middle" font-family="Liberation Sans, sans-serif" font-size="6.100" font-weight="bold" fill="#e2e2e2" letter-spacing="0">CSS</text>
<rect x="858.200" y="195" width="3.200" height="10.500" stroke="#e2e2e2" stroke-width="0.800"/><path d="M859 197.500H860.500M859 200H860.500M859 202.500H860.500" stroke="#e2e2e2" stroke-width="0.600"/><path d="M865.500 196V204.500" stroke="#e2e2e2" stroke-width="0.900"/><path d="M863.800 197.500L865.500 195L867.200 197.500ZM863.800 203L865.500 205.500L867.200 203Z" fill="#e2e2e2"/>
<text x="856.500" y="218.900" font-family="Liberation Sans, sans-serif" font-size="7.300" fill="#e2e2e2">Mem</text>
<rect x="857" y="227.500" width="11.200" height="9" rx="0.800" fill="#e2e2e2"/><path d="M858.200 235.300 L861.300 231.300 L863.400 233.600 L864.900 232.200 L867 235.300 Z" fill="#474747"/><circle cx="865.500" cy="230" r="0.850" fill="#474747"/>
</svg>
<div class="a" style="left:875.400px;top:68.700px;width:160px;height:440px;background:#474747"></div>
<div class="a" style="left:875.400px;top:55px;width:36px;height:15px;background:#474747;border-radius:2px 2px 0 0"></div>
<div class="t" style="left:878.700px;top:57.200px;color:#dedede">レイヤー</div>
<div class="a" style="left:1010.800px;top:55.300px;width:11.300px;height:12.500px;background:#4b4b4b;border-radius:1.500px 0 0 1.500px"></div>
<svg style="left:1014.800px;top:59px" width="4" height="3.800" viewBox="0 0 5 5"><path d="M0 0.700H5M0 2.500H5M0 4.300H5" stroke="#a0a0a0" stroke-width="0.950"/></svg>
<div class="a" style="left:1022.100px;top:0;width:100px;height:600px;background:#474747"></div>
<div class="a" style="left:876.300px;top:70.500px;width:79px;height:13.600px;background:#262626;border-radius:2px"></div>
<div class="t" style="left:880.200px;top:72.400px">通常</div>
<svg style="left:946.500px;top:75.500px" width="6" height="4" viewBox="0 0 6 4"><path d="M0.600 0.600 L3 3 L5.400 0.600" fill="none" stroke="#d8d8d8" stroke-width="0.900"/></svg>
<div class="t" style="left:876.800px;top:87.800px">不透明度:</div>
<div class="a" style="left:907.600px;top:86.200px;width:23.200px;height:13.200px;background:#262626;border-radius:2px"></div>
<div class="t" style="left:910.500px;top:87.900px;color:#e6e6e6">100%</div>
<svg style="left:932.800px;top:90.300px" width="5.600" height="5.400" viewBox="0 0 6 6"><path d="M0 0.300H6L3 5.800Z" fill="#f0f0f0"/></svg>
<div class="t" style="left:876.800px;top:102.300px">レイヤーをロック:</div>
<svg style="left:939.200px;top:103.300px" width="7.600" height="7.600" viewBox="0 0 8 8"><rect width="8" height="8" rx="0.800" fill="#e6e6e6"/><path d="M1 1h2v2h-2zM5 1h2v2h-2zM3 3h2v2h-2zM1 5h2v2h-2zM5 5h2v2h-2z" fill="#474747"/></svg>
<svg style="left:949.600px;top:102.600px" width="8" height="9" viewBox="0 0 8 9"><path d="M0.400 8.600 C0.400 6 1.300 5 2.800 5 L4.400 6.600 C3.800 8.200 2.200 8.900 0.400 8.600 Z M3.400 4.400 L6.400 0.600 C7.100 -0.100 8.100 0.900 7.500 1.600 L4.900 5.900 Z" fill="#e6e6e6"/></svg>
<svg style="left:960px;top:103px" width="8.400" height="8.400" viewBox="0 0 9 9"><path d="M4.500 0.800V8.200M0.800 4.500H8.200" stroke="#e6e6e6" stroke-width="0.800"/><path d="M3.300 1.900L4.500 0.200L5.700 1.900ZM3.300 7.100L4.500 8.800L5.700 7.100ZM1.900 3.300L0.200 4.500L1.900 5.700ZM7.100 3.300L8.800 4.500L7.100 5.700Z" fill="#e6e6e6"/></svg>
<svg style="left:971.2px;top:102.7px" width="7.6" height="8.6" viewBox="0 0 8 9"><rect x="0.300" y="3.800" width="7.400" height="5.200" rx="0.600" fill="#e6e6e6"/><path d="M1.800 4 V2.600 A2.200 2.200 0 0 1 6.200 2.600 V4" fill="none" stroke="#e6e6e6" stroke-width="1.200"/></svg>
<div class="t" style="left:876.800px;top:116.400px">フィル:</div>
<div class="a" style="left:900.800px;top:114.300px;width:23px;height:13.400px;background:#262626;border-radius:2px"></div>
<div class="t" style="left:903.500px;top:116.200px;color:#e6e6e6">100%</div>
<svg style="left:925.800px;top:118.500px" width="5.600" height="5.400" viewBox="0 0 6 6"><path d="M0 0.300H6L3 5.800Z" fill="#f0f0f0"/></svg>
<div class="a" style="left:875.400px;top:130px;width:146px;height:0.600px;background:#555"></div>
<div class="a" style="left:875.400px;top:131px;width:141.300px;height:16.700px;background:#5e5e5e"></div>
<svg style="left:878.3px;top:135.9px" width="9" height="7" viewBox="0 0 9 7"><path d="M0.500 3.500 C1.500 1.300 3 0.600 4.500 0.600 C6 0.600 7.500 1.300 8.500 3.500 C7.500 5.700 6 6.400 4.500 6.400 C3 6.400 1.500 5.700 0.500 3.500 Z" fill="none" stroke="#cfcfcf" stroke-width="0.800"/><circle cx="4.500" cy="3.500" r="1.600" fill="#cfcfcf"/><circle cx="5" cy="3" r="0.550" fill="#555"/></svg>
<svg style="left:892.3px;top:132.6px" width="18.4" height="13.2" viewBox="0 0 36 26" preserveAspectRatio="none"><rect width="36" height="26" fill="#fff"/><rect x="3" y="3" width="30" height="10" fill="#4f8fe6"/><rect x="3" y="12.500" width="30" height="10.500" fill="#a6cf34"/><ellipse cx="8" cy="8" rx="5" ry="4" fill="#e4ebf7"/><ellipse cx="25" cy="10.500" rx="4.500" ry="3" fill="#e4ebf7"/><path d="M3 11.500 L20 3 L24 3 L3 14 Z" fill="#e2e6ee" opacity="0.900"/><path d="M26 3 L29 3 L33 10 L33 13 Z" fill="#e2e6ee" opacity="0.900"/><ellipse cx="18" cy="10.500" rx="3.600" ry="3.200" fill="#76523e"/><ellipse cx="18" cy="12.800" rx="2.800" ry="2.600" fill="#f6e2d8"/><path d="M13.500 21 C14 15.500 22 15.500 22.500 21 Z" fill="#ecdcec"/><path d="M8 15 L10 20 L12 16 M24 15 L25.500 19.500 L27.500 16" stroke="#eef4dc" stroke-width="0.900" fill="none"/></svg>
<svg style="left:912px;top:134.600px" width="4.200" height="9.600" viewBox="0 0 4.200 9.600" fill="none" stroke="#dadada" stroke-width="1"><rect x="0.600" y="0.600" width="3" height="3.200" rx="0.900"/><rect x="0.600" y="5.800" width="3" height="3.200" rx="0.900"/><path d="M2.100 2.800V6.800" stroke-width="0.800"/></svg>
<div class="a" style="left:917.300px;top:132.300px;width:19.500px;height:13.200px;background:#5a5a5a;border:0.400px solid #4e4e4e;border-radius:1px"></div>
<svg style="left:891.800px;top:132.100px" width="19.400" height="14.200" viewBox="0 0 19.400 14.200"><rect x="0.500" y="0.500" width="18.400" height="13.200" fill="none" stroke="#202020" stroke-width="0.900"/><rect x="0.500" y="0.500" width="18.400" height="13.200" fill="none" stroke="#f4f4f4" stroke-width="0.900" stroke-dasharray="1.600 1.100"/></svg>
<div class="t" style="left:942.300px;top:134.600px;font-size:7.200px;color:#d6d6d6">493949_m</div>
<div class="a" style="left:892.300px;top:150.300px;width:18.400px;height:12.600px;background:#fff"></div>
<svg style="left:1007.8px;top:152.6px" width="7.6" height="8.6" viewBox="0 0 8 9"><rect x="0.300" y="3.800" width="7.400" height="5.200" rx="0.600" fill="#8c8c8c"/><path d="M1.800 4 V2.600 A2.200 2.200 0 0 1 6.200 2.600 V4" fill="none" stroke="#8c8c8c" stroke-width="1.200"/></svg>
</div></div>
<div class="a" style="left:792.6px;top:251.7px;width:185.3px;height:216.6px;overflow:hidden;background:#262626;box-shadow:0 0 0 0.800px #909090"><div class="a" style="left:-843.40px;top:-37.50px;width:1100px;height:600px"><div class="a" style="left:0;top:0;width:1100px;height:48.900px;background:#474747"></div><svg style="left:820px;top:60px" width="32" height="20" viewBox="820 60 32 20"><path d="M843 76.200H850.500" stroke="#777" stroke-width="0.600"/><path d="M850.200 70.500V76.500M843.300 71V75" stroke="#8a8a8a" stroke-width="0.700"/></svg><div class="t" style="left:858.600px;top:47.500px;font-size:7.200px;font-weight:bold;color:#e4e4e4;letter-spacing:0.900px;transform:scaleX(0.720);transform-origin:0 0">&lt;&gt;</div>
<div class="t" style="left:944.500px;top:47.500px;font-size:7.200px;font-weight:bold;color:#e4e4e4;letter-spacing:0.900px;transform:scaleX(0.720);transform-origin:0 0">&gt;&lt;</div>
<div class="a" style="left:852px;top:55px;width:21.200px;height:37px;background:#474747"></div>
<div class="a" style="left:852px;top:94.4px;width:21.200px;height:19.799999999999997px;background:#474747"></div>
<div class="a" style="left:852px;top:116.4px;width:21.200px;height:53.400000000000006px;background:#474747"></div>
<div class="a" style="left:852px;top:172.4px;width:21.200px;height:68.6px;background:#474747"></div>
<div class="a" style="left:852px;top:243.6px;width:21.200px;height:276.4px;background:#474747"></div>
<svg style="left:852px;top:0" width="22" height="260" viewBox="852 0 22 260" fill="none">
<circle cx="862.600" cy="64.600" r="5" stroke="#e2e2e2" stroke-width="1"/><path d="M862.600 63.800V67.600" stroke="#e2e2e2" stroke-width="1.200"/><circle cx="862.600" cy="62" r="0.700" fill="#e2e2e2"/>
<path d="M857.300 79H868M857.300 82.400H868M857.300 85.800H868" stroke="#e2e2e2" stroke-width="0.900"/><path d="M860.500 77.800V80.200M865 81.200V83.600M861.500 84.600V87" stroke="#e2e2e2" stroke-width="1.500"/>
<path d="M867.300 98.600 L868.200 99.600 L865 104 L863.300 102.600 Z" fill="#e2e2e2"/><path d="M862.600 102.300 L865.600 105 C864.500 108 861 109.600 857.200 109.300 C857.600 106 859.500 103.500 862.600 102.300 Z" fill="#e2e2e2"/><path d="M857.300 99.300H861M857.300 100.600H861M857.300 101.900H861" stroke="#c0c0c0" stroke-width="0.700" stroke-dasharray="0.800 0.450"/>
<text transform="translate(862.300 131.200) scale(0.740 1)" text-anchor="middle" font-family="Liberation Serif, serif" font-size="17" fill="#e2e2e2" letter-spacing="-0.600">Tt</text>
<text transform="translate(861.700 147.100) scale(1.250 1)" text-anchor="middle" font-family="Liberation Serif, serif" font-size="15.500" font-weight="bold" fill="#e2e2e2">¶</text>
<path d="M857.400 155.700 L862.500 160.900" stroke="#e2e2e2" stroke-width="1.100" stroke-linecap="round"/><path d="M862.800 161.200 L867.200 165.400" stroke="#e2e2e2" stroke-width="2.300" stroke-linecap="round"/><path d="M865.300 158.600 L858 165.500" stroke="#e2e2e2" stroke-width="1.800" stroke-linecap="round"/><path d="M864.300 156.300 A2.200 2.200 0 1 0 867.800 159.300" stroke="#e2e2e2" stroke-width="1.500" fill="none"/>
<text x="862.400" y="184.200" text-anchor="middle" font-family="Liberation Sans, sans-serif" font-size="6.100" font-weight="bold" fill="#e2e2e2" letter-spacing="0">CSS</text>
<rect x="858.200" y="195" width="3.200" height="10.500" stroke="#e2e2e2" stroke-width="0.800"/><path d="M859 197.500H860.500M859 200H860.500M859 202.500H860.500" stroke="#e2e2e2" stroke-width="0.600"/><path d="M865.500 196V204.500" stroke="#e2e2e2" stroke-width="0.900"/><path d="M863.800 197.500L865.500 195L867.200 197.500ZM863.800 203L865.500 205.500L867.200 203Z" fill="#e2e2e2"/>
<text x="856.500" y="218.900" font-family="Liberation Sans, sans-serif" font-size="7.300" fill="#e2e2e2">Mem</text>
<rect x="857" y="227.500" width="11.200" height="9" rx="0.800" fill="#e2e2e2"/><path d="M858.200 235.300 L861.300 231.300 L863.400 233.600 L864.900 232.200 L867 235.300 Z" fill="#474747"/><circle cx="865.500" cy="230" r="0.850" fill="#474747"/>
</svg>
<div class="a" style="left:875.400px;top:68.700px;width:160px;height:440px;background:#474747"></div>
<div class="a" style="left:875.400px;top:55px;width:36px;height:15px;background:#474747;border-radius:2px 2px 0 0"></div>
<div class="t" style="left:878.700px;top:57.200px;color:#dedede">レイヤー</div>
<div class="a" style="left:1010.800px;top:55.300px;width:11.300px;height:12.500px;background:#4b4b4b;border-radius:1.500px 0 0 1.500px"></div>
<svg style="left:1014.800px;top:59px" width="4" height="3.800" viewBox="0 0 5 5"><path d="M0 0.700H5M0 2.500H5M0 4.300H5" stroke="#a0a0a0" stroke-width="0.950"/></svg>
<div class="a" style="left:1022.100px;top:0;width:100px;height:600px;background:#474747"></div>
<div class="a" style="left:876.300px;top:70.500px;width:79px;height:13.600px;background:#262626;border-radius:2px"></div>
<div class="t" style="left:880.200px;top:72.400px">通常</div>
<svg style="left:946.500px;top:75.500px" width="6" height="4" viewBox="0 0 6 4"><path d="M0.600 0.600 L3 3 L5.400 0.600" fill="none" stroke="#d8d8d8" stroke-width="0.900"/></svg>
<div class="t" style="left:876.800px;top:87.800px">不透明度:</div>
<div class="a" style="left:907.600px;top:86.200px;width:23.200px;height:13.200px;background:#262626;border-radius:2px"></div>
<div class="t" style="left:910.500px;top:87.900px;color:#e6e6e6">100%</div>
<svg style="left:932.800px;top:90.300px" width="5.600" height="5.400" viewBox="0 0 6 6"><path d="M0 0.300H6L3 5.800Z" fill="#f0f0f0"/></svg>
<div class="t" style="left:876.800px;top:102.300px">レイヤーをロック:</div>
<svg style="left:939.200px;top:103.300px" width="7.600" height="7.600" viewBox="0 0 8 8"><rect width="8" height="8" rx="0.800" fill="#e6e6e6"/><path d="M1 1h2v2h-2zM5 1h2v2h-2zM3 3h2v2h-2zM1 5h2v2h-2zM5 5h2v2h-2z" fill="#474747"/></svg>
<svg style="left:949.600px;top:102.600px" width="8" height="9" viewBox="0 0 8 9"><path d="M0.400 8.600 C0.400 6 1.300 5 2.800 5 L4.400 6.600 C3.800 8.200 2.200 8.900 0.400 8.600 Z M3.400 4.400 L6.400 0.600 C7.100 -0.100 8.100 0.900 7.500 1.600 L4.900 5.900 Z" fill="#e6e6e6"/></svg>
<svg style="left:960px;top:103px" width="8.400" height="8.400" viewBox="0 0 9 9"><path d="M4.500 0.800V8.200M0.800 4.500H8.200" stroke="#e6e6e6" stroke-width="0.800"/><path d="M3.300 1.900L4.500 0.200L5.700 1.900ZM3.300 7.100L4.500 8.800L5.700 7.100ZM1.900 3.300L0.200 4.500L1.900 5.700ZM7.100 3.300L8.800 4.500L7.100 5.700Z" fill="#e6e6e6"/></svg>
<svg style="left:971.2px;top:102.7px" width="7.6" height="8.6" viewBox="0 0 8 9"><rect x="0.300" y="3.800" width="7.400" height="5.200" rx="0.600" fill="#e6e6e6"/><path d="M1.800 4 V2.600 A2.200 2.200 0 0 1 6.200 2.600 V4" fill="none" stroke="#e6e6e6" stroke-width="1.200"/></svg>
<div class="t" style="left:876.800px;top:116.400px">フィル:</div>
<div class="a" style="left:900.800px;top:114.300px;width:23px;height:13.400px;background:#262626;border-radius:2px"></div>
<div class="t" style="left:903.500px;top:116.200px;color:#e6e6e6">100%</div>
<svg style="left:925.800px;top:118.500px" width="5.600" height="5.400" viewBox="0 0 6 6"><path d="M0 0.300H6L3 5.800Z" fill="#f0f0f0"/></svg>
<div class="a" style="left:875.400px;top:130px;width:146px;height:0.600px;background:#555"></div>
<div class="a" style="left:875.400px;top:131px;width:141.300px;height:16.700px;background:#5e5e5e"></div>
<svg style="left:878.3px;top:135.9px" width="9" height="7" viewBox="0 0 9 7"><path d="M0.500 3.500 C1.500 1.300 3 0.600 4.500 0.600 C6 0.600 7.500 1.300 8.500 3.500 C7.500 5.700 6 6.400 4.500 6.400 C3 6.400 1.500 5.700 0.500 3.500 Z" fill="none" stroke="#cfcfcf" stroke-width="0.800"/><circle cx="4.500" cy="3.500" r="1.600" fill="#cfcfcf"/><circle cx="5" cy="3" r="0.550" fill="#555"/></svg>
<svg style="left:892.3px;top:132.6px" width="18.4" height="13.2" viewBox="0 0 36 26" preserveAspectRatio="none"><rect width="36" height="26" fill="#fff"/><rect x="3" y="3" width="30" height="10" fill="#4f8fe6"/><rect x="3" y="12.500" width="30" height="10.500" fill="#a6cf34"/><ellipse cx="8" cy="8" rx="5" ry="4" fill="#e4ebf7"/><ellipse cx="25" cy="10.500" rx="4.500" ry="3" fill="#e4ebf7"/><path d="M3 11.500 L20 3 L24 3 L3 14 Z" fill="#e2e6ee" opacity="0.900"/><path d="M26 3 L29 3 L33 10 L33 13 Z" fill="#e2e6ee" opacity="0.900"/><ellipse cx="18" cy="10.500" rx="3.600" ry="3.200" fill="#76523e"/><ellipse cx="18" cy="12.800" rx="2.800" ry="2.600" fill="#f6e2d8"/><path d="M13.500 21 C14 15.500 22 15.500 22.500 21 Z" fill="#ecdcec"/><path d="M8 15 L10 20 L12 16 M24 15 L25.500 19.500 L27.500 16" stroke="#eef4dc" stroke-width="0.900" fill="none"/></svg>
<svg style="left:912px;top:134.600px" width="4.200" height="9.600" viewBox="0 0 4.200 9.600" fill="none" stroke="#dadada" stroke-width="1"><rect x="0.600" y="0.600" width="3" height="3.200" rx="0.900"/><rect x="0.600" y="5.800" width="3" height="3.200" rx="0.900"/><path d="M2.100 2.800V6.800" stroke-width="0.800"/></svg>
<div class="a" style="left:917.300px;top:132.300px;width:20.300px;height:14px;background:#474747"></div>
<svg style="left:916.800px;top:131.800px" width="21.300" height="15" viewBox="0 0 21.300 15"><rect x="0.500" y="0.500" width="20.300" height="14" fill="none" stroke="#f4f4f4" stroke-width="0.900" stroke-dasharray="1.600 1.100"/></svg>
<div class="t" style="left:942.300px;top:134.600px;font-size:7.200px;color:#d6d6d6">493949_m</div>
<svg style="left:878.3px;top:153.2px" width="9" height="7" viewBox="0 0 9 7"><path d="M0.500 3.500 C1.500 1.300 3 0.600 4.500 0.600 C6 0.600 7.500 1.300 8.500 3.500 C7.500 5.700 6 6.400 4.500 6.400 C3 6.400 1.500 5.700 0.500 3.500 Z" fill="none" stroke="#cfcfcf" stroke-width="0.800"/><circle cx="4.500" cy="3.500" r="1.600" fill="#cfcfcf"/><circle cx="5" cy="3" r="0.550" fill="#555"/></svg>
<div class="a" style="left:892.300px;top:150.300px;width:18.400px;height:12.600px;background:#fff"></div>
<svg style="left:1007.8px;top:152.6px" width="7.6" height="8.6" viewBox="0 0 8 9"><rect x="0.300" y="3.800" width="7.400" height="5.200" rx="0.600" fill="#8c8c8c"/><path d="M1.800 4 V2.600 A2.200 2.200 0 0 1 6.200 2.600 V4" fill="none" stroke="#8c8c8c" stroke-width="1.200"/></svg>
</div></div>
<svg style="left:0;top:0" width="1024" height="501" viewBox="0 0 1024 501"><path d="M625.2 372.0 C626.6 371.5 630.3 369.0 633.3 368.8 C636.2 368.6 639.9 370.8 642.9 370.9 C645.9 371.0 649.0 369.5 651.5 369.3 C654.0 369.1 655.7 369.3 658.0 369.9 C660.3 370.4 663.0 372.5 665.5 372.6 C668.0 372.7 670.3 370.7 673.0 370.4 C675.7 370.1 678.4 371.2 681.6 370.9 C684.8 370.5 689.2 367.7 692.3 368.3 C695.3 368.9 697.0 374.4 699.9 374.7 C702.8 375.0 707.9 370.7 709.5 369.9" fill="none" stroke="#fff" stroke-width="5.8" stroke-linecap="round" stroke-linejoin="round"/><path d="M625.2 372.0 C626.6 371.5 630.3 369.0 633.3 368.8 C636.2 368.6 639.9 370.8 642.9 370.9 C645.9 371.0 649.0 369.5 651.5 369.3 C654.0 369.1 655.7 369.3 658.0 369.9 C660.3 370.4 663.0 372.5 665.5 372.6 C668.0 372.7 670.3 370.7 673.0 370.4 C675.7 370.1 678.4 371.2 681.6 370.9 C684.8 370.5 689.2 367.7 692.3 368.3 C695.3 368.9 697.0 374.4 699.9 374.7 C702.8 375.0 707.9 370.7 709.5 369.9" fill="none" stroke="#fb7f85" stroke-width="3.5" stroke-linecap="round" stroke-linejoin="round"/><path d="M660.8 409.3 C663.6 412.1 672.4 421.1 677.6 426.1 C682.8 431.1 688.0 434.8 691.9 439.1 C695.8 443.4 699.5 449.9 701.0 452.1" fill="none" stroke="#fff" stroke-width="6.0" stroke-linecap="round" stroke-linejoin="round"/><path d="M660.8 409.3 C663.6 412.1 672.4 421.1 677.6 426.1 C682.8 431.1 688.0 434.8 691.9 439.1 C695.8 443.4 699.5 449.9 701.0 452.1" fill="none" stroke="#fb7f85" stroke-width="3.7" stroke-linecap="round" stroke-linejoin="round"/><path d="M702.3 406.4 C700.6 407.5 696.0 409.9 691.9 413.2 C687.8 416.5 681.9 422.0 677.6 426.1 C673.3 430.2 669.4 434.0 665.9 437.8 C662.4 441.6 658.4 447.0 656.9 448.8" fill="none" stroke="#fff" stroke-width="6.0" stroke-linecap="round" stroke-linejoin="round"/><path d="M702.3 406.4 C700.6 407.5 696.0 409.9 691.9 413.2 C687.8 416.5 681.9 422.0 677.6 426.1 C673.3 430.2 669.4 434.0 665.9 437.8 C662.4 441.6 658.4 447.0 656.9 448.8" fill="none" stroke="#fb7f85" stroke-width="3.7" stroke-linecap="round" stroke-linejoin="round"/><path d="M824.1 370.9 C825.5 370.2 829.4 367.2 832.2 366.6 C835.0 366.0 838.1 366.6 840.8 367.2 C843.5 367.8 845.6 369.9 848.3 369.9 C851.0 369.9 854.0 367.4 856.9 367.2 C859.8 367.0 862.8 368.7 865.5 368.8 C868.2 368.9 870.5 367.4 873.0 367.7 C875.5 368.0 877.8 370.7 880.5 370.4 C883.2 370.1 886.2 366.2 889.1 366.1 C892.0 366.0 895.2 369.5 897.7 369.9 C900.2 370.3 902.1 369.2 904.2 368.3 C906.3 367.4 909.1 365.1 910.1 364.5" fill="none" stroke="#fff" stroke-width="5.8" stroke-linecap="round" stroke-linejoin="round"/><path d="M824.1 370.9 C825.5 370.2 829.4 367.2 832.2 366.6 C835.0 366.0 838.1 366.6 840.8 367.2 C843.5 367.8 845.6 369.9 848.3 369.9 C851.0 369.9 854.0 367.4 856.9 367.2 C859.8 367.0 862.8 368.7 865.5 368.8 C868.2 368.9 870.5 367.4 873.0 367.7 C875.5 368.0 877.8 370.7 880.5 370.4 C883.2 370.1 886.2 366.2 889.1 366.1 C892.0 366.0 895.2 369.5 897.7 369.9 C900.2 370.3 902.1 369.2 904.2 368.3 C906.3 367.4 909.1 365.1 910.1 364.5" fill="none" stroke="#fb7f85" stroke-width="3.5" stroke-linecap="round" stroke-linejoin="round"/><path d="M903.5 456.5 L904.5 455" fill="none" stroke="#fff" stroke-width="5.5" stroke-linecap="round" stroke-linejoin="round"/><path d="M903.5 456.5 L904.5 455" fill="none" stroke="#fb7f85" stroke-width="3.2" stroke-linecap="round" stroke-linejoin="round"/><path d="M893.9 414.0 C897.8 414.9 905.4 417.5 909.5 420.8 C913.6 424.1 918.0 429.2 918.6 433.7 C919.2 438.2 915.8 444.4 913.4 448.0 C911.0 451.6 907.5 454.0 904.3 455.1 C901.0 456.2 898.4 455.7 893.9 454.5 C889.4 453.3 880.9 451.5 877.0 448.0 C873.1 444.5 870.6 438.2 870.6 433.7 C870.6 429.2 874.4 423.9 877.0 420.8 C879.6 417.7 883.3 416.4 886.1 415.3 C888.9 414.2 890.0 413.1 893.9 414.0 Z" fill="none" stroke="#fff" stroke-width="6.199999999999999" stroke-linecap="round" stroke-linejoin="round"/><path d="M893.9 414.0 C897.8 414.9 905.4 417.5 909.5 420.8 C913.6 424.1 918.0 429.2 918.6 433.7 C919.2 438.2 915.8 444.4 913.4 448.0 C911.0 451.6 907.5 454.0 904.3 455.1 C901.0 456.2 898.4 455.7 893.9 454.5 C889.4 453.3 880.9 451.5 877.0 448.0 C873.1 444.5 870.6 438.2 870.6 433.7 C870.6 429.2 874.4 423.9 877.0 420.8 C879.6 417.7 883.3 416.4 886.1 415.3 C888.9 414.2 890.0 413.1 893.9 414.0 Z" fill="none" stroke="#fb7f85" stroke-width="3.9" stroke-linecap="round" stroke-linejoin="round"/></svg>
</div>
</body></html>
